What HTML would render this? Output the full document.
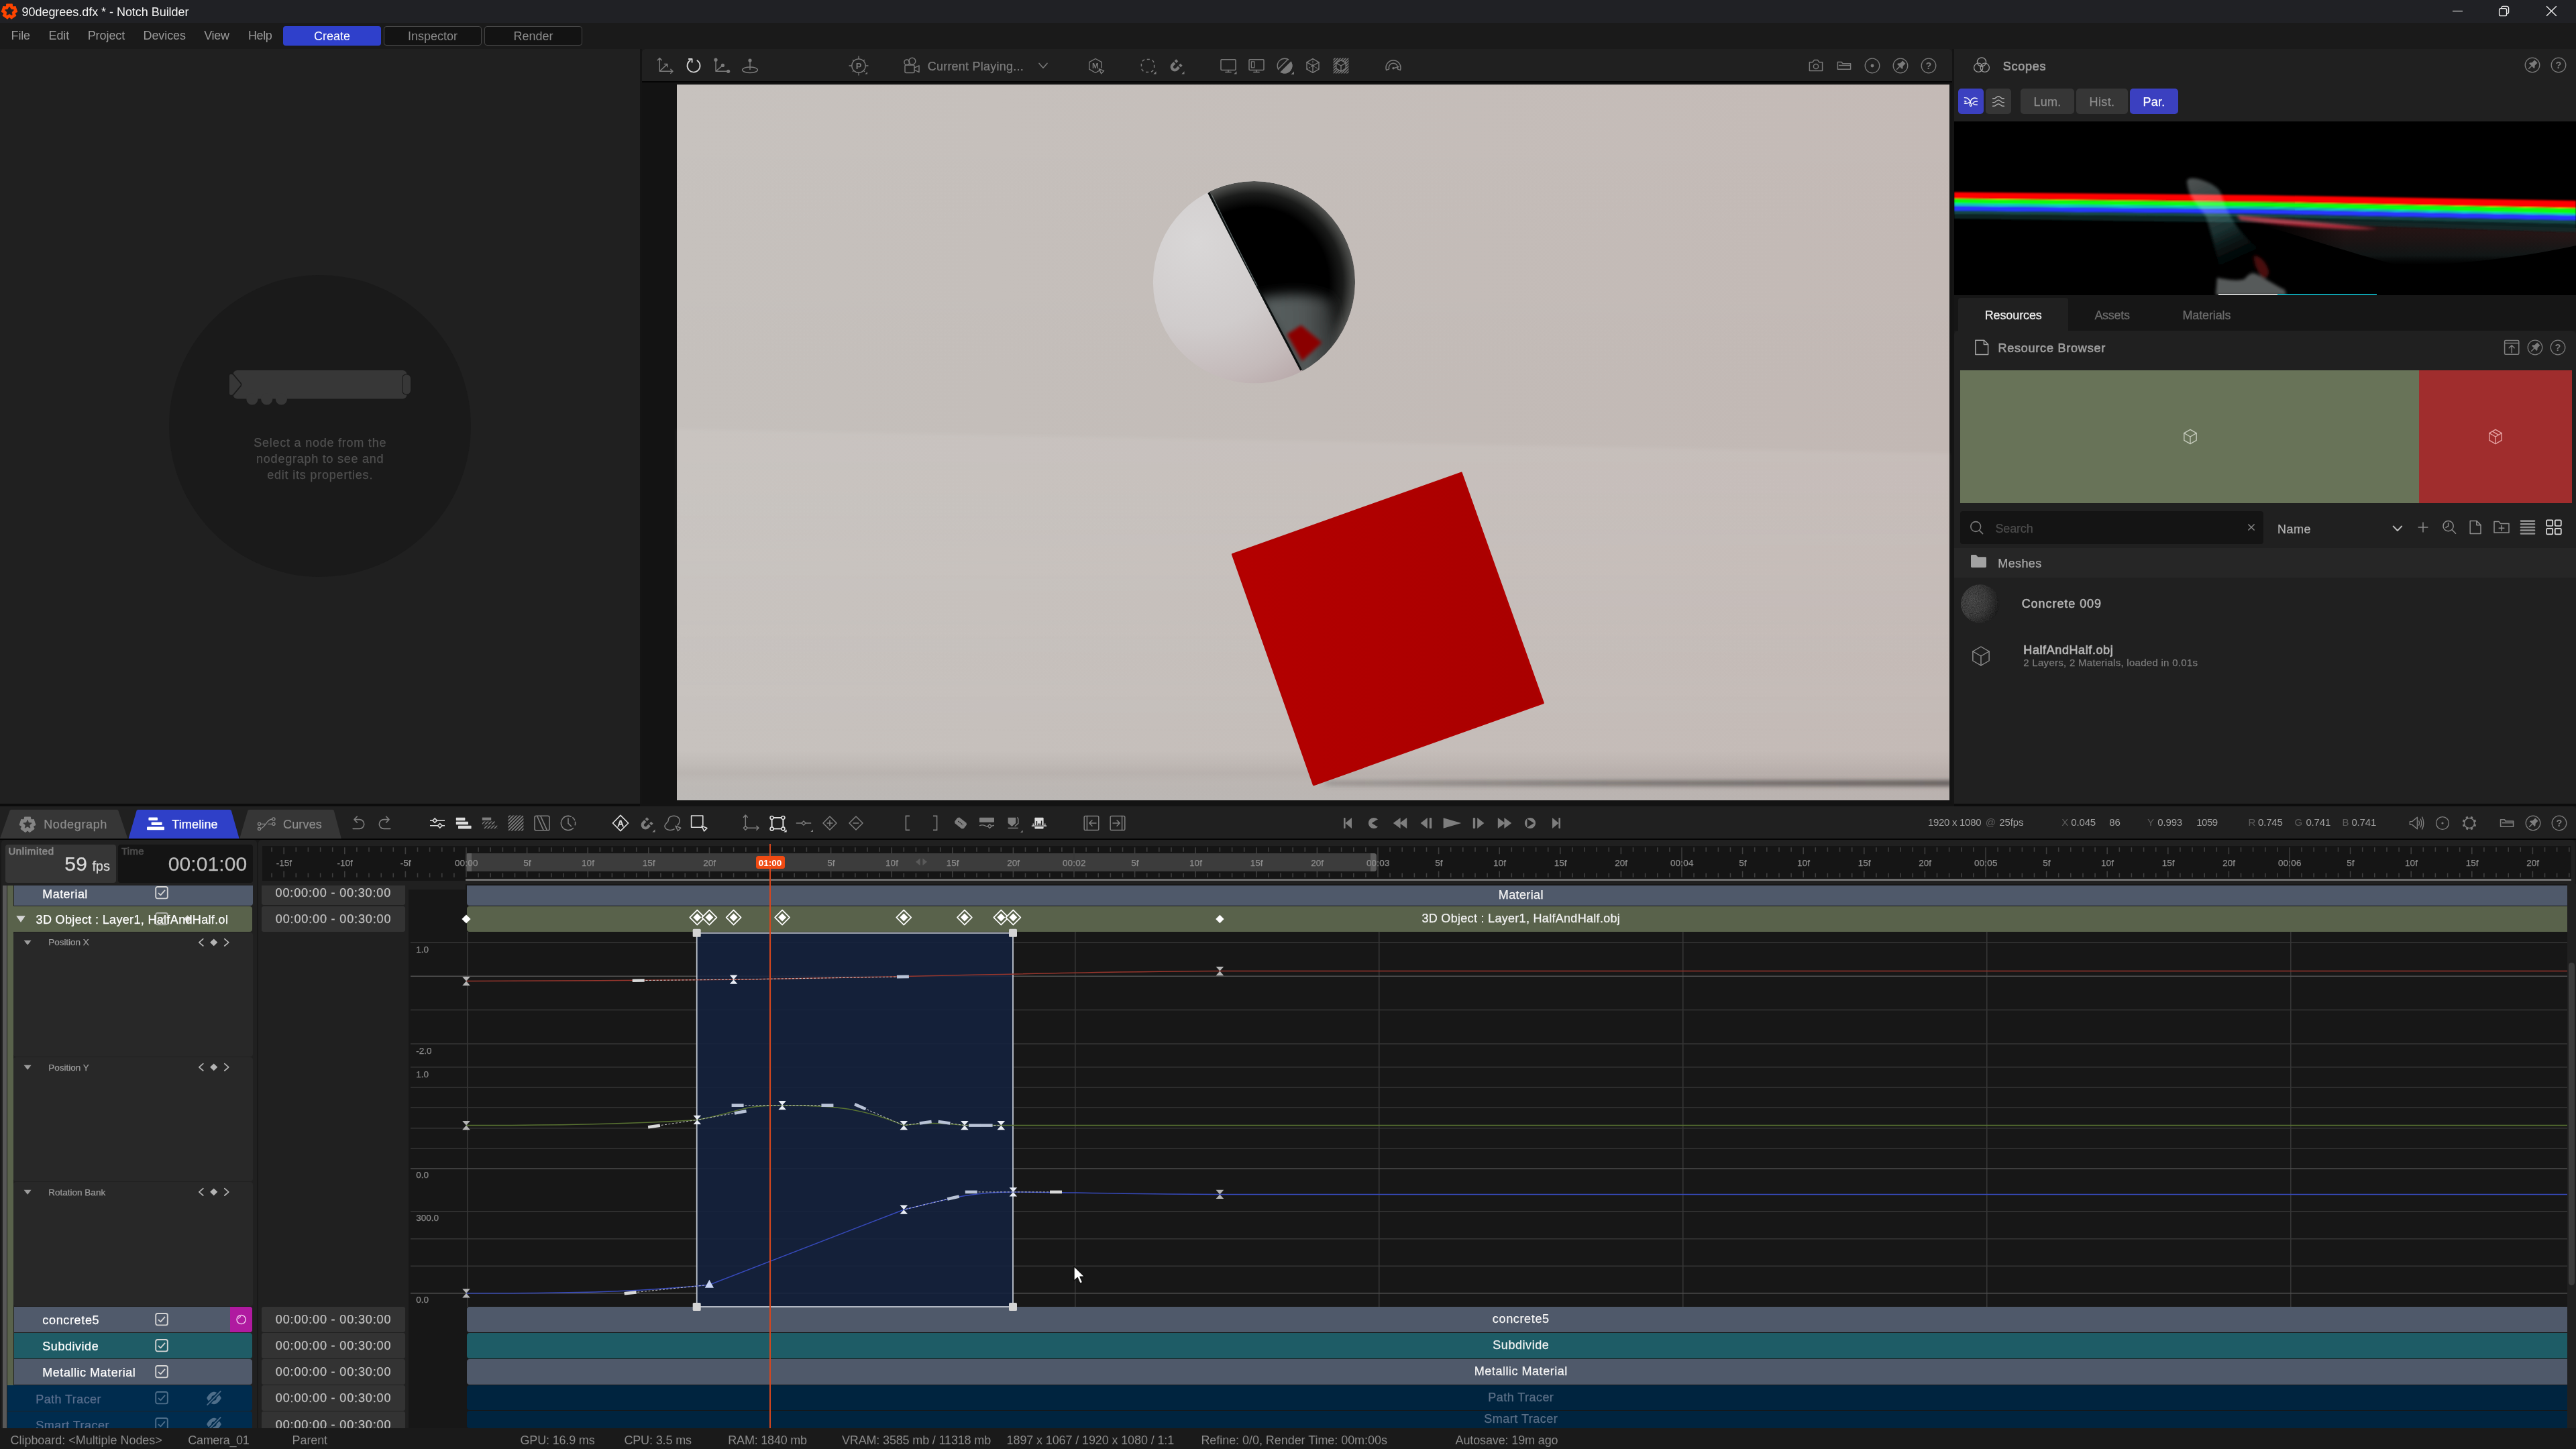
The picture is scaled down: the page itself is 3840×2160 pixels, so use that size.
<!DOCTYPE html>
<html lang="en"><head><meta charset="utf-8"><title>90degrees.dfx * - Notch Builder</title>
<style>
html,body{margin:0;padding:0;background:#1a1a1a;}
body{width:3840px;height:2160px;position:relative;overflow:hidden;font-family:"Liberation Sans", sans-serif;}
#app{position:absolute;left:0;top:0;width:3840px;height:2160px;overflow:hidden;will-change:transform;}
#app div,#app svg,#app span.t{position:absolute;}
span.t{white-space:pre;}
svg{overflow:visible;}

</style></head><body><div id="app">
<div style="left:0px;top:0px;width:3840px;height:34px;background:#202125;"></div>
<svg style="left:0px;top:0px;" width="30" height="34" viewBox="0 0 30 34"><g transform="translate(14,16.9)"><polygon points="-4.58,-7.63 -4.16,-10.83 4.16,-10.83 4.58,-7.63 5.84,-6.72 9.01,-7.30 11.58,0.61 8.67,2.00 8.19,3.48 9.73,6.32 3.00,11.20 0.78,8.87 -0.78,8.87 -3.00,11.20 -9.73,6.32 -8.19,3.48 -8.67,2.00 -11.58,0.61 -9.01,-7.30 -5.84,-6.72" fill="#ff4500" stroke="#ff4500" stroke-width="1.2" stroke-linejoin="round"/><polygon points="0.00,-6.90 2.17,-2.99 6.56,-2.13 3.52,1.14 4.06,5.58 0.00,3.70 -4.06,5.58 -3.52,1.14 -6.56,-2.13 -2.17,-2.99" fill="#202125" stroke="#202125" stroke-width="0.8" stroke-linejoin="round"/></g></svg>
<span class="t" style="left:32.50px;top:9.00px;font-size:18px;line-height:18px;color:#f4f4f4;letter-spacing:-0.037px;">90degrees.dfx * - Notch Builder</span>
<svg style="left:3640px;top:0px;" width="200" height="34" viewBox="0 0 200 34"><g stroke="#f4f4f4" stroke-width="1.35" fill="none"><path d="M16 16.5H31" stroke-width="1.1"/><rect x="85.6" y="12.6" width="11" height="11" rx="2.2"/><path d="M88.8 12.4v-0.6a2.4 2.4 0 0 1 2.4-2.4H96.4a3.2 3.2 0 0 1 3.2 3.2V18a2.4 2.4 0 0 1-2.4 2.4H96.8"/><path d="M156 9.2l14.8 14.6M170.8 9.2l-14.8 14.6"/></g></svg>
<div style="left:0px;top:34px;width:3840px;height:39px;background:#1a1a1a;"></div>
<span class="t" style="left:16.60px;top:44.00px;font-size:18px;line-height:18px;color:#9a9a9a;letter-spacing:-0.204px;">File</span>
<span class="t" style="left:72.60px;top:44.00px;font-size:18px;line-height:18px;color:#9a9a9a;letter-spacing:-0.133px;">Edit</span>
<span class="t" style="left:130.70px;top:44.00px;font-size:18px;line-height:18px;color:#9a9a9a;letter-spacing:-0.076px;">Project</span>
<span class="t" style="left:213.60px;top:44.00px;font-size:18px;line-height:18px;color:#9a9a9a;letter-spacing:-0.119px;">Devices</span>
<span class="t" style="left:304.20px;top:44.00px;font-size:18px;line-height:18px;color:#9a9a9a;letter-spacing:-0.301px;">View</span>
<span class="t" style="left:370.00px;top:44.00px;font-size:18px;line-height:18px;color:#9a9a9a;letter-spacing:-0.383px;">Help</span>
<div style="left:422px;top:39px;width:146px;height:29px;background:#2f40cb;border-radius:4px;"></div>
<span class="t" style="left:468.00px;top:45.00px;font-size:18px;line-height:18px;color:#ffffff;letter-spacing:-0.005px;">Create</span>
<div style="left:572px;top:39px;width:146px;height:29px;background:#131313;border-radius:4px;box-sizing:border-box;border:1px solid #464646;"></div>
<span class="t" style="left:608.00px;top:45.00px;font-size:18px;line-height:18px;color:#8a8a8a;letter-spacing:-0.005px;">Inspector</span>
<div style="left:722px;top:39px;width:146px;height:29px;background:#131313;border-radius:4px;box-sizing:border-box;border:1px solid #464646;"></div>
<span class="t" style="left:765.50px;top:45.00px;font-size:18px;line-height:18px;color:#8a8a8a;letter-spacing:-0.008px;">Render</span>
<div style="left:0px;top:73px;width:954px;height:1125px;background:#202020;"></div>
<div style="left:957px;top:73px;width:1953px;height:1125px;background:#131313;border-radius:5px 5px 0 0;"></div>
<div style="left:957px;top:73px;width:1953px;height:48px;background:#202020;border-radius:5px 5px 0 0;"></div>
<div style="left:957px;top:121px;width:1953px;height:2px;background:#050505;"></div>
<div style="left:2913px;top:73px;width:927px;height:108px;background:#202020;"></div>
<div style="left:2913px;top:181px;width:927px;height:259px;background:#000;"></div>
<div style="left:2913px;top:440px;width:927px;height:53px;background:#161616;"></div>
<div style="left:2919px;top:444px;width:164px;height:49px;background:#202020;border-radius:4px 4px 0 0;"></div>
<div style="left:2913px;top:493px;width:927px;height:705px;background:#202020;border-radius:6px 6px 0 0;"></div>
<div style="left:0px;top:1198px;width:3840px;height:3.5px;background:#0c0c0c;"></div>
<div style="left:954px;top:1198px;width:1959px;height:3.5px;background:#131313;"></div>
<div style="left:0px;top:1201.5px;width:3840px;height:48.5px;background:#202020;border-radius:0 5px 0 0;"></div>
<div style="left:0px;top:1250px;width:3840px;height:1.6px;background:#050505;"></div>
<div style="left:0px;top:1251.6px;width:3840px;height:877.4px;background:#181818;"></div>
<div style="left:0px;top:2129px;width:3840px;height:31px;background:#1a1a1a;"></div>
<svg style="left:0;top:0" width="3840" height="1200" viewBox="0 0 3840 1200">
<defs><clipPath id="vclip"><rect x="1009" y="126" width="1897" height="1067"/></clipPath>
 <linearGradient id="vbgx" x1="0" x2="1" y1="0" y2="0"><stop offset="0" stop-color="#c7c2be"/><stop offset="0.5" stop-color="#c5beba"/><stop offset="1" stop-color="#c4bab6"/></linearGradient>
 <linearGradient id="vbgy" x1="0" x2="0" y1="0" y2="1">
  <stop offset="0" stop-color="#000" stop-opacity="0"/>
  <stop offset="0.48" stop-color="#000" stop-opacity="0.012"/>
  <stop offset="0.93" stop-color="#000" stop-opacity="0.0"/>
  <stop offset="0.948" stop-color="#1a1010" stop-opacity="0.035"/>
  <stop offset="0.962" stop-color="#1a1010" stop-opacity="0.075"/>
  <stop offset="0.976" stop-color="#30383c" stop-opacity="0.06"/>
  <stop offset="1" stop-color="#60707a" stop-opacity="0.10"/>
 </linearGradient>
 <linearGradient id="hzn" x1="0" x2="0" y1="0" y2="1"><stop offset="0" stop-color="#fff" stop-opacity="0.07"/><stop offset="0.25" stop-color="#fff" stop-opacity="0.06"/><stop offset="1" stop-color="#fff" stop-opacity="0"/></linearGradient>
 <linearGradient id="shad" x1="0" x2="1"><stop offset="0" stop-color="#4a4644" stop-opacity="0.25"/><stop offset="0.45" stop-color="#4a4644" stop-opacity="0.55"/><stop offset="1" stop-color="#4a4644" stop-opacity="0.8"/></linearGradient>
 <filter id="b4" x="-5%" y="-300%" width="110%" height="700%"><feGaussianBlur stdDeviation="6 3"/></filter>
 <filter id="b8" x="-20%" y="-20%" width="140%" height="140%"><feGaussianBlur stdDeviation="9"/></filter>
 <filter id="b3" x="-20%" y="-20%" width="140%" height="140%"><feGaussianBlur stdDeviation="2.5"/></filter>
 <radialGradient id="sphw" cx="0.22" cy="0.30" r="0.95"><stop offset="0" stop-color="#d9d7d7"/><stop offset="0.45" stop-color="#d0cccc"/><stop offset="0.72" stop-color="#c4baba"/><stop offset="0.9" stop-color="#b7a7a8"/><stop offset="1" stop-color="#ab9a9b"/></radialGradient>
 <radialGradient id="sphk" cx="0.5" cy="0.5" r="0.5"><stop offset="0" stop-color="#000"/><stop offset="0.74" stop-color="#000"/><stop offset="0.88" stop-color="#1b1c1b"/><stop offset="0.96" stop-color="#424341"/><stop offset="1" stop-color="#545553"/></radialGradient>
 <linearGradient id="refl" x1="0" x2="1"><stop offset="0" stop-color="#5e6666"/><stop offset="0.6" stop-color="#565c5c"/><stop offset="1" stop-color="#2e3030"/></linearGradient>
 <linearGradient id="cubeg" x1="0" x2="1"><stop offset="0" stop-color="#b40000"/><stop offset="1" stop-color="#a90000"/></linearGradient>
 <clipPath id="sphc"><circle cx="1869.5" cy="420.7" r="150.6"/></clipPath>
 <clipPath id="blk"><path d="M1801.7 287.2 Q1866 412 1939.6 551.7 L2100 600 L2100 200 L1801 200Z"/></clipPath>
</defs>
<rect x="1009" y="126" width="1897" height="1067" fill="url(#vbgx)"/>
<rect x="1009" y="126" width="1897" height="1067" fill="url(#vbgy)"/>
<path d="M1009 640 L2906 676 L2906 1100 L1009 1100Z" fill="url(#hzn)" filter="url(#b3)"/>
<!-- floor contact shadow -->
<g clip-path="url(#vclip)">
<rect x="1975" y="1163" width="940" height="9" fill="url(#shad)" filter="url(#b4)"/>
</g>
<!-- sphere -->
<circle cx="1869.5" cy="420.7" r="150.6" fill="url(#sphw)"/>
<g clip-path="url(#sphc)">
 <g clip-path="url(#blk)">
  <circle cx="1869.5" cy="420.7" r="150.6" fill="url(#sphk)"/>
  <g filter="url(#b8)">
   <path d="M1872 446 C1910 436 1950 436 1984 446 L1994 520 L1950 580 L1930 545Z" fill="url(#refl)" opacity="0.95"/>
  </g>
  <path d="M1918.5 498.3 L1939.6 484.7 L1970.6 510.7 L1941 538 Z" fill="#8a0000" filter="url(#b3)"/>
 </g>
 <path d="M1801.7 287.2 Q1866 412 1939.6 551.7" stroke="#0c1010" stroke-width="3" fill="none"/>
 <path d="M1806 290 Q1840 360 1874 426" stroke="#9aa" stroke-width="1.2" fill="none" opacity="0.55"/>
</g>
<!-- cube -->
<path d="M2178.3 705.1 L2300.3 1047.8 L1958.3 1169.8 L1837.4 826.4 Z" fill="url(#cubeg)" stroke="#b00000" stroke-width="3" stroke-linejoin="round"/>
</svg>
<svg style="left:975px;top:81.6px" width="32" height="32" viewBox="-16 -16 32 32"><g stroke="#7b7b7b" stroke-width="1.46" fill="none" stroke-linecap="round" stroke-linejoin="round"><path d="M-7.7 8.3V-11.2M-10.7 -8.2l3-3.2 3 3.2M-7.7 8.3H11.8M8.8 5.3l3.2 3-3.2 3M-7.7 8.3L3.6 -2.4M-0.6 -2.6h4.4v4.4"/></g></svg>
<svg style="left:1017.8px;top:81.6px" width="32" height="32" viewBox="-16 -16 32 32"><g stroke="#d6d6d6" stroke-width="1.81" fill="none" stroke-linecap="round" stroke-linejoin="round"><path d="M5.4 -7.8A9.5 9.5 0 1 1 -5.2 -7.9"/><path d="M-7.2 -10h4.8v4.8"/></g></svg>
<svg style="left:1059.8px;top:81.6px" width="32" height="32" viewBox="-16 -16 32 32"><g stroke="#7b7b7b" stroke-width="1.46" fill="none" stroke-linecap="round" stroke-linejoin="round"><path d="M-9 8.3V-8.8M-9 8.3H9.6M-9 8.3L1.4 -0.6"/><g fill="#7b7b7b" stroke="none"><circle cx="-9" cy="-8.8" r="2.6"/><circle cx="9.6" cy="8.3" r="2.6"/><circle cx="1.4" cy="-0.6" r="2.6"/></g></g></svg>
<svg style="left:1102.2px;top:81.6px" width="32" height="32" viewBox="-16 -16 32 32"><g stroke="#7b7b7b" stroke-width="1.46" fill="none" stroke-linecap="round" stroke-linejoin="round"><ellipse cx="0" cy="6.2" rx="11.4" ry="4.3"/><path d="M0 -8V5.6"/><circle cx="0" cy="-8" r="2.6" fill="#7b7b7b" stroke="none"/></g></svg>
<svg style="left:1264px;top:81.6px" width="32" height="32" viewBox="-16 -16 32 32"><g stroke="#7b7b7b" stroke-width="1.29" fill="none" stroke-linecap="round" stroke-linejoin="round"><circle r="10.2"/><path d="M10.20 0.00L14.00 0.00M7.21 7.21L8.63 8.63M0.00 10.20L0.00 14.00M-7.21 7.21L-8.63 8.63M-10.20 0.00L-14.00 0.00M-7.21 -7.21L-8.63 -8.63M-0.00 -10.20L-0.00 -14.00M7.21 -7.21L8.63 -8.63"/></g><text x="0" y="4.6" text-anchor="middle" font-size="13" font-weight="700" fill="#7b7b7b" font-family="Liberation Sans, sans-serif">P</text><path d="M13 9.0V12.6H9.4Z" fill="#7b7b7b" stroke="none"/></svg>
<svg style="left:1342.5px;top:81.6px" width="32" height="32" viewBox="-16 -16 32 32"><g stroke="#7b7b7b" stroke-width="1.46" fill="none" stroke-linecap="round" stroke-linejoin="round"><rect x="-10" y="-1" width="14" height="11.5" rx="1.5"/><path d="M4 6.2L11 9.6V-0.2L4 3.2"/><circle cx="-7.2" cy="-5.2" r="3.9"/><circle cx="0.8" cy="-6.8" r="5"/></g></svg>
<svg style="left:1538.8px;top:81.6px" width="32" height="32" viewBox="-16 -16 32 32"><g stroke="#7b7b7b" stroke-width="1.55" fill="none" stroke-linecap="round" stroke-linejoin="round"><path d="M-6 -3.6L0 3.2L6 -3.6"/></g></svg>
<svg style="left:1616.8px;top:81.6px" width="32" height="32" viewBox="-16 -16 32 32"><g stroke="#7b7b7b" stroke-width="1.38" fill="none" stroke-linecap="round" stroke-linejoin="round"><path d="M7.5 6.2 0 10.5 -9.3 5.2V-5.3L0 -10.5 9.3 -5.3V3"/><path d="M5.2 4.6L12.6 7.6 8.6 11.8Z"/></g><text x="-0.2" y="3.9" text-anchor="middle" font-size="11.5" font-weight="700" fill="#7b7b7b" font-family="Liberation Sans, sans-serif">M</text></svg>
<svg style="left:1694.8px;top:81.6px" width="32" height="32" viewBox="-16 -16 32 32"><rect x="-9.6" y="-9.6" width="19.2" height="19.2" rx="7.4" fill="none" stroke="#7b7b7b" stroke-width="1.5" stroke-dasharray="4.2 3.81" stroke-dashoffset="-0.9"/><path d="M12.5 8.3V12.5H8.3Z" fill="#7b7b7b" stroke="none"/></svg>
<svg style="left:1736.5px;top:81.6px" width="32" height="32" viewBox="-16 -16 32 32"><g transform="translate(-1,1) scale(0.88) rotate(45)"><path d="M-7.6 -3.4V1.2A7.6 7.6 0 0 0 7.6 1.2V-3.4H2.7V1.2A2.7 2.7 0 0 1 -2.7 1.2V-3.4Z" fill="#7b7b7b"/><rect x="-7.6" y="-9.6" width="4.9" height="4.2" fill="#7b7b7b"/><rect x="2.7" y="-9.6" width="4.9" height="4.2" fill="#7b7b7b"/></g><path d="M12.5 8.3V12.5H8.3Z" fill="#7b7b7b" stroke="none"/></svg>
<svg style="left:1814.6px;top:81.6px" width="32" height="32" viewBox="-16 -16 32 32"><g stroke="#7b7b7b" stroke-width="1.46" fill="none" stroke-linecap="round" stroke-linejoin="round"><rect x="-11" y="-9.2" width="22" height="15.6" rx="1.2"/><path d="M0 6.4V9.4M-4.2 9.6H4.2"/></g><path d="M12.5 8.3V12.5H8.3Z" fill="#7b7b7b" stroke="none"/></svg>
<svg style="left:1856.5px;top:81.6px" width="32" height="32" viewBox="-16 -16 32 32"><g stroke="#7b7b7b" stroke-width="1.46" fill="none" stroke-linecap="round" stroke-linejoin="round"><rect x="-11" y="-9.2" width="22" height="15.6" rx="1.2"/><path d="M0 6.4V9.4M-4.2 9.6H4.2"/></g><g stroke="#7b7b7b" stroke-width="1.29" fill="none" stroke-linecap="round" stroke-linejoin="round"><rect x="-7.6" y="-6.2" width="4.4" height="9" /></g></svg>
<svg style="left:1898.8px;top:81.6px" width="32" height="32" viewBox="-16 -16 32 32"><g stroke="#7b7b7b" stroke-width="1.38" fill="none" stroke-linecap="round" stroke-linejoin="round"><circle r="10.8"/><path d="M7.64 -7.64A10.8 10.8 0 0 1 -7.64 7.64Z" fill="#7b7b7b"/><path d="M-7.64 7.64L7.64 -7.64" stroke="#202020" stroke-width="4.2"/><path d="M-9.6 4.9L4.9 -9.6" /></g><path d="M14 8.4V13H9.4Z" fill="#7b7b7b" stroke="none"/></svg>
<svg style="left:1940.5px;top:81.6px" width="32" height="32" viewBox="-16 -16 32 32"><g stroke="#7b7b7b" stroke-width="1.38" fill="none" stroke-linecap="round" stroke-linejoin="round"><path d="M0 -10.4L9.01 -5.2V5.2L0 10.4L-9.01 5.2V-5.2Z"/><path d="M-9.01 -5.2L0 0L9.01 -5.2M0 0V10.4"/><path d="M0 -10.4V0M-9.01 5.2L0 0L9.01 5.2" stroke-dasharray="1.6 2.2" stroke-width="1.1"/></g></svg>
<svg style="left:1982.8px;top:81.6px" width="32" height="32" viewBox="-16 -16 32 32"><clipPath id="hc"><path clip-rule="evenodd" d="M-11.5 -11.5H11.5V11.5H-11.5ZM0 -8.3L7.2 -4.15V4.15L0 8.3L-7.2 4.15V-4.15Z"/></clipPath><g clip-path="url(#hc)"><path d="M-36 12L-12 -12M-32 12L-8 -12M-28 12L-4 -12M-24 12L0 -12M-20 12L4 -12M-16 12L8 -12M-12 12L12 -12M-8 12L16 -12M-4 12L20 -12M0 12L24 -12M4 12L28 -12M8 12L32 -12M12 12L36 -12" stroke="#7b7b7b" stroke-width="1.5"/></g><g stroke="#7b7b7b" stroke-width="1.38" fill="none" stroke-linecap="round" stroke-linejoin="round"><path d="M0 -8.3L7.19 -4.15V4.15L0 8.3L-7.19 4.15V-4.15Z"/><path d="M-7.19 -4.15L0 0L7.19 -4.15M0 0V8.3"/></g></svg>
<svg style="left:2060.5px;top:81.6px" width="32" height="32" viewBox="-16 -16 32 32"><g stroke="#7b7b7b" stroke-width="1.46" fill="none" stroke-linecap="round" stroke-linejoin="round"><path d="M-10.4 6.6A11 11 0 1 1 10.4 6.6L6.3 4.8A6.6 6.6 0 1 0 -6.3 4.8Z"/><path d="M0.4 3.8L8.4 1.4"/><circle cx="0" cy="3.8" r="1.7" fill="#7b7b7b" stroke="none"/></g></svg>
<svg style="left:2690.8px;top:81.6px" width="32" height="32" viewBox="-16 -16 32 32"><g stroke="#7b7b7b" stroke-width="1.46" fill="none" stroke-linecap="round" stroke-linejoin="round"><path d="M-9.6 -5.2H-5L-2.6 -8.4H2.6L5 -5.2H9.6V7.4H-9.6Z"/><circle cx="0" cy="1" r="3.6"/></g></svg>
<svg style="left:2732.8px;top:81.6px" width="32" height="32" viewBox="-16 -16 32 32"><g stroke="#7b7b7b" stroke-width="1.46" fill="none" stroke-linecap="round" stroke-linejoin="round"><path d="M-9.6 -5.4H-3.6L-2.2 -3.2H9.6V5.2H-9.6Z"/><path d="M-7.4 -0.4H9.4" /></g></svg>
<svg style="left:2774.8px;top:81.6px" width="32" height="32" viewBox="-16 -16 32 32"><g stroke="#7b7b7b" stroke-width="1.29" fill="none" stroke-linecap="round" stroke-linejoin="round"><circle r="10.8"/><circle r="2.4" fill="#7b7b7b" stroke="none"/></g></svg>
<svg style="left:2816.8px;top:81.6px" width="32" height="32" viewBox="-16 -16 32 32"><g stroke="#7b7b7b" stroke-width="1.29" fill="none" stroke-linecap="round" stroke-linejoin="round"><circle r="10.8"/></g><g transform="rotate(45)" fill="#7b7b7b"><path d="M-3 -7.6H3V-2.2L5.2 0.4V1.8H-5.2V0.4L-3 -2.2Z"/><rect x="-0.8" y="1.8" width="1.6" height="6.4"/></g></svg>
<svg style="left:2858.6px;top:81.6px" width="32" height="32" viewBox="-16 -16 32 32"><g stroke="#7b7b7b" stroke-width="1.29" fill="none" stroke-linecap="round" stroke-linejoin="round"><circle r="10.8"/></g><text x="0" y="5.2" text-anchor="middle" font-size="14.5" font-weight="700" fill="#7b7b7b" font-family="Liberation Sans, sans-serif">?</text></svg>
<span class="t" style="left:1382.70px;top:90.00px;font-size:18px;line-height:18px;color:#7c7c7c;-webkit-text-stroke:0.25px #7c7c7c;letter-spacing:0.230px;">Current Playing...</span>
<svg style="left:2938.2px;top:81.4px" width="32" height="32" viewBox="-16 -16 32 32"><g stroke="#9a9a9a" stroke-width="1.29" fill="none" stroke-linecap="round" stroke-linejoin="round"><circle cx="0" cy="-4.6" r="6.6"/><circle cx="-4.8" cy="3.8" r="6.6"/><circle cx="4.8" cy="3.8" r="6.6"/></g></svg>
<span class="t" style="left:2985.80px;top:90.00px;font-size:18px;line-height:18px;color:#9c9c9c;-webkit-text-stroke:0.7px #9c9c9c;letter-spacing:0.742px;">Scopes</span>
<svg style="left:3758.5px;top:81.4px" width="32" height="32" viewBox="-16 -16 32 32"><g stroke="#7b7b7b" stroke-width="1.29" fill="none" stroke-linecap="round" stroke-linejoin="round"><circle r="10.8"/></g><g transform="rotate(45)" fill="#7b7b7b"><path d="M-3 -7.6H3V-2.2L5.2 0.4V1.8H-5.2V0.4L-3 -2.2Z"/><rect x="-0.8" y="1.8" width="1.6" height="6.4"/></g></svg>
<svg style="left:3797.8px;top:81.4px" width="32" height="32" viewBox="-16 -16 32 32"><g stroke="#7b7b7b" stroke-width="1.29" fill="none" stroke-linecap="round" stroke-linejoin="round"><circle r="10.8"/></g><text x="0" y="5.2" text-anchor="middle" font-size="14.5" font-weight="700" fill="#7b7b7b" font-family="Liberation Sans, sans-serif">?</text></svg>
<div style="left:2919px;top:132px;width:38px;height:38px;background:#3b40c0;border-radius:5px;"></div>
<svg style="left:2922px;top:135px" width="32" height="32" viewBox="-16 -16 32 32"><g stroke="#fff" stroke-width="1.38" fill="none" stroke-linecap="round" stroke-linejoin="round"><path d="M-9.6 -5.4C-6 -5.4 -3.8 -5.2 -1.2 0.2C1 5 1.8 7 0 7.4C-2 7.6 -2.4 3 0.2 -1.6C2.4 -5.2 5.6 -5.8 9.4 -4"/><path d="M-9.6 -0.2C-7.4 -0.8 -6.4 0.6 -8.2 0.9M-9.6 3C-6 3.6 -4.6 3.6 -2.4 1.4M2.6 3.2C5 5 7 5.4 9.4 5.2M3.8 1.6C5.6 0.2 7.2 0 9.4 0.2"/></g></svg>
<div style="left:2960px;top:132px;width:38px;height:38px;background:#363636;border-radius:5px;"></div>
<svg style="left:2963px;top:135px" width="32" height="32" viewBox="-16 -16 32 32"><g stroke="#b8b8b8" stroke-width="1.29" fill="none" stroke-linecap="round" stroke-linejoin="round"><path d="M-8.4 -3.9999999999999996H-6.6C-3.6 -3.9999999999999996 -3 -7.3999999999999995 0 -7.3999999999999995C3 -7.3999999999999995 3.6 -3.9999999999999996 6.6 -3.9999999999999996H8.4"/><path d="M-8.4 1.6H-6.6C-3.6 1.6 -3 -1.8 0 -1.8C3 -1.8 3.6 1.6 6.6 1.6H8.4"/><path d="M-8.4 7.199999999999999H-6.6C-3.6 7.199999999999999 -3 3.8 0 3.8C3 3.8 3.6 7.199999999999999 6.6 7.199999999999999H8.4"/></g></svg>
<div style="left:3012px;top:132px;width:80px;height:38px;background:#363636;border-radius:5px;"></div>
<span class="t" style="left:3031.50px;top:143.00px;font-size:18px;line-height:18px;color:#8e8e8e;-webkit-text-stroke:0.25px #8e8e8e;letter-spacing:0.242px;">Lum.</span>
<div style="left:3095px;top:132px;width:77px;height:38px;background:#363636;border-radius:5px;"></div>
<span class="t" style="left:3114.50px;top:143.00px;font-size:18px;line-height:18px;color:#8e8e8e;-webkit-text-stroke:0.25px #8e8e8e;letter-spacing:0.400px;">Hist.</span>
<div style="left:3175px;top:132px;width:72px;height:38px;background:#3b40c0;border-radius:5px;"></div>
<span class="t" style="left:3194.50px;top:143.00px;font-size:18px;line-height:18px;color:#ffffff;-webkit-text-stroke:0.25px #ffffff;letter-spacing:0.242px;">Par.</span>
<div style="left:954px;top:73px;width:3px;height:1125px;background:#141414;"></div>
<div style="left:2910px;top:73px;width:3px;height:1125px;background:#141414;"></div>
<div style="left:251.8px;top:409.8px;width:450px;height:450px;background:#1a1a1a;border-radius:50%;"></div>
<svg style="left:330px;top:540px;" width="300" height="80" viewBox="0 0 300 80"><rect x="17.6" y="12.1" width="258.8" height="42.4" rx="6" fill="#373737"/><circle cx="45.9" cy="55" r="8.6" fill="#373737"/><circle cx="67.7" cy="55" r="8.6" fill="#373737"/><circle cx="89.4" cy="55" r="8.6" fill="#373737"/><path d="M14.2 17.7 Q12 17.9 12 20 V46.5 Q12 48.8 14.4 49 L17 48.2 L28.4 34.6 Q29.4 33.3 28.4 32 L17 18.4Z" fill="#373737" stroke="#1a1a1a" stroke-width="3.4" paint-order="stroke"/><rect x="270.2" y="18.6" width="11.8" height="29" rx="5.5" fill="#373737" stroke="#1a1a1a" stroke-width="2.4" paint-order="stroke"/></svg>
<span class="t" style="left:378.20px;top:651.00px;font-size:18px;line-height:18px;color:#505050;-webkit-text-stroke:0.25px #505050;letter-spacing:0.768px;">Select a node from the</span>
<span class="t" style="left:382.10px;top:675.00px;font-size:18px;line-height:18px;color:#505050;-webkit-text-stroke:0.25px #505050;letter-spacing:0.752px;">nodegraph to see and</span>
<span class="t" style="left:398.20px;top:699.00px;font-size:18px;line-height:18px;color:#505050;-webkit-text-stroke:0.25px #505050;letter-spacing:0.796px;">edit its properties.</span>
<svg style="left:0;top:0" width="3840" height="460" viewBox="0 0 3840 460"><defs>
<filter id="sb1" x="-2%" y="-50%" width="104%" height="200%"><feGaussianBlur stdDeviation="0.9"/></filter>
<filter id="sb2" x="-20%" y="-20%" width="140%" height="140%"><feGaussianBlur stdDeviation="2.2"/></filter>
<clipPath id="scl"><rect x="2913" y="181" width="927" height="259"/></clipPath>
<linearGradient id="trail" x1="0" x2="0" y1="0" y2="1"><stop offset="0" stop-color="#3a1a1a" stop-opacity="0.85"/><stop offset="0.45" stop-color="#2a1c1c" stop-opacity="0.8"/><stop offset="0.8" stop-color="#1a2222" stop-opacity="0.7"/><stop offset="1" stop-color="#101818" stop-opacity="0"/></linearGradient>
<linearGradient id="ghg" x1="0" x2="0.35" y1="0" y2="1"><stop offset="0" stop-color="#505454"/><stop offset="0.3" stop-color="#384242"/><stop offset="0.65" stop-color="#1a3030"/><stop offset="1" stop-color="#0a1414" stop-opacity="0.2"/></linearGradient>
<linearGradient id="trailx" x1="0" x2="1"><stop offset="0" stop-color="#000" stop-opacity="1"/><stop offset="0.25" stop-color="#000" stop-opacity="0.15"/><stop offset="1" stop-color="#000" stop-opacity="0"/></linearGradient>
</defs>
<g clip-path="url(#scl)">
 <path d="M3380 326 L3840 340 L3840 366 C3760 384 3640 398 3570 394 C3500 376 3430 352 3380 338Z" fill="url(#trail)"/>
 <path d="M3380 320 H3840 V400 H3380Z" fill="url(#trailx)"/>
 <g filter="url(#sb1)">
  <path d="M2913 285.8L3370 290.3L3840 298.4L3840 301L3370 292.0L2913 288Z" fill="#ff0000" opacity="0.5"/>
  <path d="M2913 287L3370 291.5L3840 299.7L3840 310.6L3370 300.7L2913 296.3Z" fill="#ff0000" opacity="1"/>
  <path d="M2913 296.3L3370 301.4L3840 310.6L3840 319L3370 308.2L2913 303.5Z" fill="#10ff10" opacity="1"/>
  <path d="M2913 303L3370 308.5L3840 318.6L3840 321.4L3370 311.7L2913 307.4Z" fill="#10c8c0" opacity="1"/>
  <path d="M2913 307.2L3370 312.2L3840 321.2L3840 328.6L3370 318.6L2913 314.2Z" fill="#2838ff" opacity="1"/>
  <path d="M2913 314L3370 319.1L3840 328.4L3840 334L3370 323.6L2913 319Z" fill="#185050" opacity="0.9"/>
  <path d="M2913 319L3370 324.3L3840 334L3840 346L3370 332.1L2913 326Z" fill="#0c2c2c" opacity="0.8"/>
 </g>
 <g filter="url(#sb2)" style="mix-blend-mode:screen">
  <path d="M3260 270 C3262 262 3280 266 3296 274 C3306 280 3310 284 3312 292 C3324 330 3346 354 3364 368 C3370 386 3368 396 3360 404 L3310 404 C3304 380 3296 346 3288 322 C3276 304 3262 296 3260 270Z" fill="url(#ghg)"/>
  <path d="M3303 440 L3305 414 C3316 416 3334 420 3346 416 C3352 408 3358 406 3362 408 C3376 414 3392 426 3406 432 L3408 440Z" fill="#565a5a"/>
  <path d="M3360 382 C3368 380 3378 390 3382 404 C3382 412 3378 416 3372 414 C3366 406 3360 394 3360 382Z" fill="#4a1010"/>
  <path d="M3334 321 C3400 326 3470 332 3544 341 C3500 343 3420 338 3340 328Z" fill="#a82030"/>
 </g>
 <rect x="3307" y="438.4" width="88" height="1.6" fill="#f0f0f0"/>
 <rect x="3395" y="438.4" width="148" height="1.6" fill="#10c8d8"/>
</g></svg>
<span class="t" style="left:2958.70px;top:461.00px;font-size:18px;line-height:18px;color:#f2f2f2;-webkit-text-stroke:0.25px #f2f2f2;letter-spacing:-0.116px;">Resources</span>
<span class="t" style="left:3122.40px;top:461.00px;font-size:18px;line-height:18px;color:#6e6e6e;-webkit-text-stroke:0.25px #6e6e6e;letter-spacing:-0.305px;">Assets</span>
<span class="t" style="left:3253.40px;top:461.00px;font-size:18px;line-height:18px;color:#6e6e6e;-webkit-text-stroke:0.25px #6e6e6e;letter-spacing:-0.115px;">Materials</span>
<svg style="left:2940px;top:500px;" width="32" height="36" viewBox="0 0 32 36"><path d="M4.8 7.2H17.6L23.6 13.2V28.6H4.8Z M17.4 7.4V13.4H23.4" fill="none" stroke="#a2a2a2" stroke-width="1.5" stroke-linejoin="round"/></svg>
<span class="t" style="left:2978.40px;top:510.00px;font-size:18px;line-height:18px;color:#9c9c9c;-webkit-text-stroke:0.7px #9c9c9c;letter-spacing:0.784px;">Resource Browser</span>
<svg style="left:3728px;top:502px;" width="32" height="32" viewBox="0 0 32 32"><g transform="translate(16.2,15.8)" fill="none" stroke="#7e7e7e" stroke-width="1.5" stroke-linejoin="round" stroke-linecap="round"><rect x="-10.6" y="-10.4" width="21.2" height="20.8" rx="1.5"/><path d="M-10.6 -6.2H10.6M0 8V-2.6M-4 1L0 -3L4 1"/></g></svg>
<svg style="left:3762.9px;top:501.79999999999995px" width="32" height="32" viewBox="-16 -16 32 32"><g stroke="#7b7b7b" stroke-width="1.29" fill="none" stroke-linecap="round" stroke-linejoin="round"><circle r="10.8"/></g><g transform="rotate(45)" fill="#7b7b7b"><path d="M-3 -7.6H3V-2.2L5.2 0.4V1.8H-5.2V0.4L-3 -2.2Z"/><rect x="-0.8" y="1.8" width="1.6" height="6.4"/></g></svg>
<svg style="left:3797.2px;top:501.79999999999995px" width="32" height="32" viewBox="-16 -16 32 32"><g stroke="#7b7b7b" stroke-width="1.29" fill="none" stroke-linecap="round" stroke-linejoin="round"><circle r="10.8"/></g><text x="0" y="5.2" text-anchor="middle" font-size="14.5" font-weight="700" fill="#7b7b7b" font-family="Liberation Sans, sans-serif">?</text></svg>
<div style="left:2922px;top:552px;width:683.6px;height:197.6px;background:#687358;"></div>
<div style="left:3605.6px;top:552px;width:228.2px;height:197.6px;background:#a02d2d;"></div>
<svg style="left:3248.5px;top:635.2px" width="32" height="32" viewBox="-16 -16 32 32"><g stroke="#c6cbbd" stroke-width="1.38" fill="none" stroke-linecap="round" stroke-linejoin="round"><path d="M0 -10.6L9.18 -5.3V5.3L0 10.6L-9.18 5.3V-5.3Z"/><path d="M-9.18 -5.3L0 0L9.18 -5.3M0 0V10.6"/></g></svg>
<svg style="left:3704.3px;top:635.2px" width="32" height="32" viewBox="-16 -16 32 32"><g stroke="#e6a4a4" stroke-width="1.38" fill="none" stroke-linecap="round" stroke-linejoin="round"><path d="M0 -10.6L9.18 -5.3V5.3L0 10.6L-9.18 5.3V-5.3Z"/><path d="M-9.18 -5.3L0 0L9.18 -5.3M0 0V10.6"/></g><path d="M-4.6 -7.9L4.6 -2.65" stroke="#e6a4a4" stroke-width="1.4"/></svg>
<div style="left:2922px;top:762px;width:451.8px;height:49.4px;background:#141414;border-radius:4px;"></div>
<svg style="left:2930px;top:770px;" width="34" height="34" viewBox="0 0 34 34"><g fill="none" stroke="#7a7a7a" stroke-width="1.6" stroke-linecap="round"><circle cx="15.2" cy="15" r="7.4"/><path d="M20.6 20.6L25.6 25.6"/></g></svg>
<span class="t" style="left:2974.50px;top:779.00px;font-size:18px;line-height:18px;color:#4c4c4c;-webkit-text-stroke:0.25px #4c4c4c;letter-spacing:-0.174px;">Search</span>
<svg style="left:3345.5px;top:776px;" width="20" height="20" viewBox="0 0 20 20"><path d="M5.4 5.4L14.6 14.6M14.6 5.4L5.4 14.6" stroke="#8a8a8a" stroke-width="1.4" fill="none"/></svg>
<span class="t" style="left:3395.00px;top:780.00px;font-size:18px;line-height:18px;color:#b4b4b4;-webkit-text-stroke:0.25px #b4b4b4;letter-spacing:0.496px;">Name</span>
<svg style="left:3560px;top:774px;" width="28" height="28" viewBox="0 0 28 28"><path d="M7.6 10.4L13.9 17L20.2 10.4" stroke="#c0c0c0" stroke-width="1.9" fill="none" stroke-linecap="round" stroke-linejoin="round"/></svg>
<svg style="left:3596.3px;top:770.2px;" width="32" height="32" viewBox="0 0 32 32"><path d="M16 8.6V23.4M8.6 16H23.4" stroke="#8c8c8c" stroke-width="1.5" fill="none"/></svg>
<svg style="left:3635.4px;top:770.2px;" width="32" height="32" viewBox="0 0 32 32"><g fill="none" stroke="#8c8c8c" stroke-width="1.5" stroke-linecap="round"><circle cx="14.6" cy="14.2" r="7.6"/><path d="M20.2 19.8L25.6 25.2M14.6 9.8V14.4L11 16.4"/></g></svg>
<svg style="left:3674.2px;top:770.2px;" width="32" height="32" viewBox="0 0 32 32"><path d="M8.2 6.6H18L24 12.6V25.4H8.2Z M17.8 6.8V12.8H23.8" fill="none" stroke="#8c8c8c" stroke-width="1.5" stroke-linejoin="round"/></svg>
<svg style="left:3713.3px;top:770.2px;" width="32" height="32" viewBox="0 0 32 32"><g fill="none" stroke="#8c8c8c" stroke-width="1.5" stroke-linejoin="round" stroke-linecap="round"><path d="M5 24V7.6H12L14.4 10.4H27V24Z"/><path d="M16 13.4V21M12.2 17.2H19.8"/></g></svg>
<svg style="left:3752.4px;top:770.2px;" width="32" height="32" viewBox="0 0 32 32"><path d="M6 6.6H26M6 11.3H26M6 16H26M6 20.7H26M6 25.4H26" stroke="#8c8c8c" stroke-width="2.7" stroke-linecap="round" fill="none"/></svg>
<svg style="left:3791.2px;top:770.2px;" width="32" height="32" viewBox="0 0 32 32"><g fill="none" stroke="#e2e2e2" stroke-width="1.7"><rect x="5.2" y="5.4" width="9" height="8.6" rx="1.2"/><rect x="17.8" y="5.4" width="9" height="8.6" rx="1.2"/><rect x="5.2" y="17.8" width="9" height="8.6" rx="1.2"/><rect x="17.8" y="17.8" width="9" height="8.6" rx="1.2"/></g></svg>
<div style="left:2913px;top:817px;width:927px;height:44px;background:#262626;"></div>
<svg style="left:2936px;top:826px;" width="28" height="24" viewBox="0 0 28 24"><path d="M2 2.4Q2 1 3.4 1H9.6L12.4 4.2H23.6Q25 4.2 25 5.6V18.6Q25 20 23.6 20H3.4Q2 20 2 18.6Z" fill="#a2a2a2"/></svg>
<span class="t" style="left:2978.30px;top:831.00px;font-size:18px;line-height:18px;color:#a8a8a8;-webkit-text-stroke:0.25px #a8a8a8;letter-spacing:0.361px;">Meshes</span>
<svg style="left:2922px;top:870px;" width="60" height="60" viewBox="0 0 60 60"><defs><radialGradient id="csg" cx="0.28" cy="0.42" r="0.78"><stop offset="0" stop-color="#525252"/><stop offset="0.5" stop-color="#464646"/><stop offset="0.8" stop-color="#2e2e2e"/><stop offset="1" stop-color="#1c1c1c"/></radialGradient>
<filter id="csn" x="0" y="0" width="100%" height="100%"><feTurbulence type="fractalNoise" baseFrequency="0.9" numOctaves="2" seed="3"/><feColorMatrix values="0 0 0 0 0  0 0 0 0 0  0 0 0 0 0  0.9 0.9 0.9 0 -1.05"/><feComposite in2="SourceGraphic" operator="in"/></filter></defs>
<circle cx="29.8" cy="30" r="28.7" fill="url(#csg)"/><circle cx="29.8" cy="30" r="28.7" fill="#000" filter="url(#csn)" opacity="0.55"/></svg>
<span class="t" style="left:3013.70px;top:891.00px;font-size:18px;line-height:18px;color:#b6b6b6;-webkit-text-stroke:0.5px #b6b6b6;letter-spacing:0.935px;">Concrete 009</span>
<svg style="left:2933px;top:958px" width="40" height="40" viewBox="-20 -20 40 40"><g stroke="#929292" stroke-width="1.38" fill="none" stroke-linecap="round" stroke-linejoin="round"><path d="M0 -14L12.12 -7.0V7.0L0 14L-12.12 7.0V-7.0Z"/><path d="M-12.12 -7.0L0 0L12.12 -7.0M0 0V14"/></g></svg>
<span class="t" style="left:3016.30px;top:960.00px;font-size:18px;line-height:18px;color:#b6b6b6;-webkit-text-stroke:0.7px #b6b6b6;letter-spacing:0.595px;">HalfAndHalf.obj</span>
<span class="t" style="left:3016.30px;top:980.00px;font-size:15px;line-height:15px;color:#7c7c7c;-webkit-text-stroke:0.25px #7c7c7c;letter-spacing:0.281px;">2 Layers, 2 Materials, loaded in 0.01s</span>
<svg style="left:0;top:1200px" width="520" height="52" viewBox="0 0 520 52"><path d="M0 50L14.6 8.6Q15.2 7 17 7H174Q175.8 7 176.4 8.6L190.4 50Z" fill="#363636"/><path d="M191.6 50L203.6 8.6Q204.2 7 206 7H342.4Q344.2 7 344.8 8.6L356.6 50Z" fill="#2f40c8"/><path d="M357.2 50L369.4 8.6Q370 7 371.8 7H495.4Q497.2 7 497.8 8.6L508.8 50Z" fill="#363636"/></svg>
<svg style="left:23.2px;top:1210.6px" width="36" height="36" viewBox="-18.0 -18.0 36 36"><polygon points="-4.79,-7.97 -4.23,-11.02 4.23,-11.02 4.79,-7.97 6.10,-7.02 9.17,-7.43 11.78,0.62 9.06,2.09 8.56,3.63 9.90,6.43 3.05,11.40 0.81,9.26 -0.81,9.26 -3.05,11.40 -9.90,6.43 -8.56,3.63 -9.06,2.09 -11.78,0.62 -9.17,-7.43 -6.10,-7.02" fill="#858585" stroke="#858585" stroke-width="1.2" stroke-linejoin="round"/><polygon points="0.00,-6.60 1.76,-2.43 6.28,-2.04 2.85,0.93 3.88,5.34 0.00,3.00 -3.88,5.34 -2.85,0.93 -6.28,-2.04 -1.76,-2.43" fill="#363636" stroke="#363636" stroke-width="0.8" stroke-linejoin="round"/></svg>
<span class="t" style="left:65.20px;top:1220.00px;font-size:18px;line-height:18px;color:#8c8c8c;-webkit-text-stroke:0.25px #8c8c8c;letter-spacing:0.636px;">Nodegraph</span>
<svg style="left:214.0px;top:1210.0px" width="36" height="36" viewBox="-18.0 -18.0 36 36"><g fill="#fff"><rect x="-10.6" y="-9.4" width="13.6" height="4.4" rx="1"/><rect x="-6.4" y="-2.4" width="16" height="4.4" rx="1"/><rect x="-13" y="4.6" width="26" height="4.6" rx="1"/></g></svg>
<span class="t" style="left:256.20px;top:1220.00px;font-size:18px;line-height:18px;color:#ffffff;-webkit-text-stroke:0.25px #ffffff;letter-spacing:0.155px;">Timeline</span>
<svg style="left:378.5px;top:1209.0px" width="36" height="36" viewBox="-18.0 -18.0 36 36"><g fill="none" stroke="#8a8a8a" stroke-width="1.3"><path d="M-8.6 8C-0.6 6.6 -0.4 -5.6 8.8 -6"/><path d="M-8.4 1.3H-1.6M2.4 1.3H8.8"/><circle cx="-10.5" cy="1.3" r="2.1"/><circle cx="-10.5" cy="8.6" r="2.1"/><circle cx="10.9" cy="-6" r="2.1"/><circle cx="10.9" cy="1.3" r="2.1" /></g></svg>
<span class="t" style="left:422.00px;top:1220.00px;font-size:18px;line-height:18px;color:#8c8c8c;-webkit-text-stroke:0.25px #8c8c8c;letter-spacing:0.164px;">Curves</span>
<svg style="left:517.3px;top:1208.5px" width="36" height="36" viewBox="-18.0 -18.0 36 36"><g fill="none" stroke="#7e7e7e" stroke-width="1.6" stroke-linecap="round" stroke-linejoin="round"><path d="M-8.8 8.4H0.8A6.9 6.9 0 0 0 0.8 -5.4H-6.6M-2.6 -10L-7 -5.4L-2.6 -0.8"/></g></svg>
<svg style="left:555.0px;top:1208.5px" width="36" height="36" viewBox="-18.0 -18.0 36 36"><g fill="none" stroke="#7e7e7e" stroke-width="1.6" stroke-linecap="round" stroke-linejoin="round"><path d="M8.8 8.4H-0.8A6.9 6.9 0 0 1 -0.8 -5.4H6.6M2.6 -10L7 -5.4L2.6 -0.8"/></g></svg>
<svg style="left:634.0px;top:1208.5px" width="36" height="36" viewBox="-18.0 -18.0 36 36"><g fill="#202020" stroke="#dcdcdc" stroke-width="1.6"><path d="M-11 -3.8H11M-11 3.8H11"/><path d="M-7 -3.8L-3.8 -7L-0.6 -3.8L-3.8 -0.6Z"/><path d="M0.6 3.8L3.8 0.6L7 3.8L3.8 7Z"/></g></svg>
<svg style="left:672.5px;top:1208.5px" width="36" height="36" viewBox="-18.0 -18.0 36 36"><g fill="#dcdcdc"><rect x="-11.2" y="-8.2" width="13.6" height="4.4" rx="0.6"/><rect x="-11.2" y="-2.2" width="18.2" height="4.4" rx="0.6"/><rect x="-8" y="3.8" width="19.6" height="4.6" rx="0.6"/></g></svg>
<svg style="left:711.8px;top:1208.5px" width="36" height="36" viewBox="-18.0 -18.0 36 36"><rect x="-11.2" y="-8.4" width="13.4" height="4.2" fill="#7e7e7e"/><clipPath id="lh"><path d="M-11.2 -2.4H8V2H-11.2ZM-8.6 3.6H11.4V8.2H-8.6Z"/></clipPath><g clip-path="url(#lh)"><path d="M-44 14L-16 -14M-39 14L-11 -14M-34 14L-6 -14M-29 14L-1 -14M-24 14L4 -14M-19 14L9 -14M-14 14L14 -14M-9 14L19 -14M-4 14L24 -14M1 14L29 -14M6 14L34 -14M11 14L39 -14M16 14L44 -14" stroke="#7e7e7e" stroke-width="1.5"/></g></svg>
<svg style="left:750.8px;top:1208.5px" width="36" height="36" viewBox="-18.0 -18.0 36 36"><clipPath id="hs"><rect x="-11.4" y="-11.4" width="22.8" height="22.8" rx="1.5"/></clipPath><g clip-path="url(#hs)"><path d="M-44 14L-16 -14M-39 14L-11 -14M-34 14L-6 -14M-29 14L-1 -14M-24 14L4 -14M-19 14L9 -14M-14 14L14 -14M-9 14L19 -14M-4 14L24 -14M1 14L29 -14M6 14L34 -14M11 14L39 -14M16 14L44 -14" stroke="#7e7e7e" stroke-width="1.6"/></g></svg>
<svg style="left:789.7px;top:1208.5px" width="36" height="36" viewBox="-18.0 -18.0 36 36"><g fill="none" stroke="#7e7e7e" stroke-width="1.6" stroke-linejoin="round"><rect x="-11" y="-10.8" width="22" height="21.6" rx="2.4"/><path d="M-7.4 -10.6L2.2 10.6M-2.2 -10.6L7.4 10.6"/></g></svg>
<svg style="left:828.8px;top:1208.5px" width="36" height="36" viewBox="-18.0 -18.0 36 36"><g fill="none" stroke="#7e7e7e" stroke-width="1.6" stroke-linecap="round"><path d="M0 -10.6A10.6 10.6 0 1 0 7.5 7.5"/><path d="M0 -10.6A10.6 10.6 0 0 1 9.6 4.6" stroke-dasharray="4.4 3"/><path d="M0 -7V0.4L4.4 4.6"/></g></svg>
<svg style="left:906.8px;top:1208.5px" width="36" height="36" viewBox="-18.0 -18.0 36 36"><path d="M0 -11.6L11.6 0L0 11.6L-11.6 0Z" fill="none" stroke="#dcdcdc" stroke-width="1.7" stroke-linejoin="round"/><text x="0" y="4.7" text-anchor="middle" font-size="13.5" font-weight="700" fill="#dcdcdc" stroke="#dcdcdc" stroke-width="0.35" font-family="Liberation Sans, sans-serif">A</text></svg>
<svg style="left:945.7px;top:1210.1px" width="36" height="36" viewBox="-18.0 -18.0 36 36"><g transform="translate(-1,1) scale(0.88) rotate(45)"><path d="M-7.6 -3.4V1.2A7.6 7.6 0 0 0 7.6 1.2V-3.4H2.7V1.2A2.7 2.7 0 0 1 -2.7 1.2V-3.4Z" fill="#7e7e7e"/><rect x="-7.6" y="-9.6" width="4.9" height="4.2" fill="#7e7e7e"/><rect x="2.7" y="-9.6" width="4.9" height="4.2" fill="#7e7e7e"/></g><path d="M12.5 8.3V12.5H8.3Z" fill="#7e7e7e" stroke="none"/></svg>
<svg style="left:985.2px;top:1208.5px" width="36" height="36" viewBox="-18.0 -18.0 36 36"><g fill="none" stroke="#7e7e7e" stroke-width="1.5" stroke-linejoin="round"><path d="M2.6 8.6C-2 11.6 -10.8 11 -12 5.4C-12.8 0.6 -6.4 -0.6 -6.6 -5C-6.8 -10.6 3.8 -13.4 9 -7.4C11.6 -4 9.6 1 6.6 3.4"/><path d="M4 4.2L11.8 7.2L7.6 11.6Z"/></g></svg>
<svg style="left:1023.2px;top:1208.5px" width="36" height="36" viewBox="-18.0 -18.0 36 36"><g fill="none" stroke="#dcdcdc" stroke-linejoin="round"><path d="M5.6 6.2H-10.4V-11H6.8V3.8" stroke-width="1.6"/><path d="M5 4.2L13 7.4L8.6 12Z" stroke-width="1.6"/></g></svg>
<svg style="left:1101.6px;top:1208.5px" width="36" height="36" viewBox="-18.0 -18.0 36 36"><g fill="none" stroke="#7e7e7e" stroke-width="1.5" stroke-linecap="round" stroke-linejoin="round"><path d="M-8.7 4.6V-11.6M-11.6 -8.8L-8.7 -12L-5.8 -8.8M-6 7.3H10.6M7.8 4.4L11 7.3L7.8 10.2"/><path d="M-8.7 4.4L-5.8 7.3L-8.7 10.2L-11.6 7.3Z"/></g></svg>
<svg style="left:1140.7px;top:1208.5px" width="36" height="36" viewBox="-18.0 -18.0 36 36"><g fill="#202020" stroke="#dcdcdc" stroke-width="1.7"><rect x="-8.4" y="-8" width="16.8" height="16.4" fill="none" stroke-width="2"/><circle cx="-8.4" cy="-8" r="2.5"/><circle cx="8.4" cy="-8" r="2.5"/><circle cx="-8.4" cy="8.4" r="2.5"/><circle cx="8.4" cy="8.4" r="2.5"/></g><path d="M13.6 9.399999999999999V13.6H9.399999999999999Z" fill="#dcdcdc" stroke="none"/></svg>
<svg style="left:1179.8px;top:1208.5px" width="36" height="36" viewBox="-18.0 -18.0 36 36"><g fill="none" stroke="#7e7e7e" stroke-width="1.4"><path d="M-11.2 0H-3M3 0H11.2"/><path d="M-3 0L0 -3L3 0L0 3Z"/></g><path d="M14 9.4V13H10.4Z" fill="#7e7e7e" stroke="none"/></svg>
<svg style="left:1218.5px;top:1208.5px" width="36" height="36" viewBox="-18.0 -18.0 36 36"><g fill="none" stroke="#7e7e7e" stroke-width="1.5" stroke-linejoin="round"><path d="M0 -10L10 0L0 10L-10 0Z"/><path d="M-4.4 0H4.4M0 -4.4V4.4"/></g></svg>
<svg style="left:1257.5px;top:1208.5px" width="36" height="36" viewBox="-18.0 -18.0 36 36"><g fill="none" stroke="#7e7e7e" stroke-width="1.5" stroke-linejoin="round"><path d="M0 -10L10 0L0 10L-10 0Z"/><path d="M-4.4 0H4.4"/></g></svg>
<svg style="left:1335.2px;top:1208.5px" width="36" height="36" viewBox="-18.0 -18.0 36 36"><path d="M3 -10.6H-2.6V10.4H3" fill="none" stroke="#7e7e7e" stroke-width="1.6"/></svg>
<svg style="left:1375.6px;top:1208.5px" width="36" height="36" viewBox="-18.0 -18.0 36 36"><path d="M-3 -10.6H2.6V10.4H-3" fill="none" stroke="#7e7e7e" stroke-width="1.6"/></svg>
<svg style="left:1413.8px;top:1208.8px" width="36" height="36" viewBox="-18.0 -18.0 36 36"><g transform="rotate(38)"><path d="M-8.6 -3.4L-6.6 -5.6H6.6L8.6 -3.4V3.4L6.6 5.6H-6.6L-8.6 3.4Z" fill="#7e7e7e"/><path d="M-4.6 0H4.6" stroke="#202020" stroke-width="1.6" stroke-dasharray="1.6 1.2"/></g></svg>
<svg style="left:1453.0px;top:1208.5px" width="36" height="36" viewBox="-18.0 -18.0 36 36"><rect x="-11" y="-8.2" width="22" height="7" rx="0.8" fill="#7e7e7e"/><g fill="none" stroke="#7e7e7e" stroke-width="1.4"><path d="M-11 3.8C-4 0.6 -2 5.6 1.6 5.2M7 4.6C8.6 3.8 9.8 3.4 11 3.2"/><path d="M1.4 4.6L4.3 1.7L7.2 4.6L4.3 7.5Z"/></g></svg>
<svg style="left:1491.6px;top:1208.5px" width="36" height="36" viewBox="-18.0 -18.0 36 36"><path d="M-7.4 -8.2H4.2V0L-1.6 5L-7.4 0Z" fill="#7e7e7e"/><path d="M6 -8.2Q7.8 -8 7.8 -6V0.4L2.6 5" fill="none" stroke="#7e7e7e" stroke-width="1.5"/><path d="M-7.4 7.4H7.6" stroke="#7e7e7e" stroke-width="1.5"/><path d="M14.6 10.4V14H11.0Z" fill="#7e7e7e" stroke="none"/></svg>
<svg style="left:1530.6px;top:1208.5px" width="36" height="36" viewBox="-18.0 -18.0 36 36"><rect x="-6.6" y="-8.2" width="13.2" height="16.6" rx="0.8" fill="#dcdcdc"/><path d="M-11.2 4.2H11.2" stroke="#dcdcdc" stroke-width="1.4"/><path d="M-8.8 4V0.4M8.8 4V0.4" stroke="#dcdcdc" stroke-width="1.2"/><path d="M-3.6 3.6V-3M-1.2 3.6V0.6M1.2 3.6V0.6M3.6 3.6V-3.4" stroke="#202020" stroke-width="1.5"/><path d="M-6.6 4.2H6.6" stroke="#202020" stroke-width="1.2"/></svg>
<svg style="left:1608.6px;top:1208.5px" width="36" height="36" viewBox="-18.0 -18.0 36 36"><g fill="none" stroke="#7e7e7e" stroke-width="1.5" stroke-linecap="round" stroke-linejoin="round"><rect x="-10.8" y="-10.6" width="21.6" height="21.2" rx="1.6"/><path d="M-6.6 -10.4V10.4M7 0H-3M1 -4.2L-3.2 0L1 4.2"/></g></svg>
<svg style="left:1647.5px;top:1208.5px" width="36" height="36" viewBox="-18.0 -18.0 36 36"><g fill="none" stroke="#7e7e7e" stroke-width="1.5" stroke-linecap="round" stroke-linejoin="round"><rect x="-10.8" y="-10.6" width="21.6" height="21.2" rx="1.6"/><path d="M6.6 -10.4V10.4M-7 0H3M-1 -4.2L3.2 0L-1 4.2"/></g></svg>
<svg style="left:1990.5px;top:1208.5px" width="36" height="36" viewBox="-18.0 -18.0 36 36"><g fill="#7e7e7e"><rect x="-6" y="-8.1" width="2.6" height="16.2" rx="1"/><path d="M6 -8.1V8.1L-3.6 0Z"/></g></svg>
<svg style="left:2029.5px;top:1208.5px" width="36" height="36" viewBox="-18.0 -18.0 36 36"><circle r="8.1" fill="#7e7e7e"/><path d="M9 -7.6V7.6L-3 0Z" fill="#202020"/><path d="M-2.8 0L5 -5V5Z" fill="#202020"/></svg>
<svg style="left:2069.2px;top:1208.5px" width="36" height="36" viewBox="-18.0 -18.0 36 36"><g fill="#7e7e7e"><path d="M0.6 -8.1V8.1L-10.2 0Z"/><path d="M10.2 -8.1V8.1L-0.6 0Z"/></g></svg>
<svg style="left:2108.3px;top:1208.5px" width="36" height="36" viewBox="-18.0 -18.0 36 36"><g fill="#7e7e7e"><path d="M1.8 -8.1V8.1L-8.4 0Z"/><rect x="4.8" y="-8.1" width="3.4" height="16.2" rx="1.2"/></g></svg>
<svg style="left:2147.0px;top:1208.5px" width="36" height="36" viewBox="-18.0 -18.0 36 36"><path d="M-13.4 -7.8V7.8L13.4 0Z" fill="#7e7e7e"/></svg>
<svg style="left:2186.4px;top:1208.5px" width="36" height="36" viewBox="-18.0 -18.0 36 36"><g fill="#7e7e7e"><path d="M-1.8 -8.1V8.1L8.4 0Z"/><rect x="-8.2" y="-8.1" width="3.4" height="16.2" rx="1.2"/></g></svg>
<svg style="left:2225.4px;top:1208.5px" width="36" height="36" viewBox="-18.0 -18.0 36 36"><g fill="#7e7e7e"><path d="M-0.6 -8.1V8.1L10.2 0Z"/><path d="M-10.2 -8.1V8.1L0.6 0Z"/></g></svg>
<svg style="left:2263.2px;top:1208.5px" width="36" height="36" viewBox="-18.0 -18.0 36 36"><circle r="8.1" fill="#7e7e7e"/><path d="M-4.6 -6.6V6.6L5.6 0Z" fill="#202020"/></svg>
<svg style="left:2302.4px;top:1208.5px" width="36" height="36" viewBox="-18.0 -18.0 36 36"><g fill="#7e7e7e"><rect x="3.4" y="-8.1" width="2.6" height="16.2" rx="1"/><path d="M-6 -8.1V8.1L3.6 0Z"/></g></svg>
<span class="t" style="left:2874.00px;top:1218.00px;font-size:15px;line-height:15px;color:#a0a0a0;letter-spacing:-0.307px;">1920 x 1080</span>
<span class="t" style="left:2959.70px;top:1218.00px;font-size:15px;line-height:15px;color:#5c5c5c;">@</span>
<span class="t" style="left:2980.20px;top:1218.00px;font-size:15px;line-height:15px;color:#a0a0a0;letter-spacing:-0.101px;">25fps</span>
<span class="t" style="left:3073.30px;top:1218.00px;font-size:15px;line-height:15px;color:#5c5c5c;">X</span>
<span class="t" style="left:3087.30px;top:1218.00px;font-size:15px;line-height:15px;color:#a0a0a0;letter-spacing:-0.169px;">0.045</span>
<span class="t" style="left:3144.20px;top:1218.00px;font-size:15px;line-height:15px;color:#a0a0a0;">86</span>
<span class="t" style="left:3200.90px;top:1218.00px;font-size:15px;line-height:15px;color:#5c5c5c;">Y</span>
<span class="t" style="left:3216.30px;top:1218.00px;font-size:15px;line-height:15px;color:#a0a0a0;letter-spacing:-0.169px;">0.993</span>
<span class="t" style="left:3274.30px;top:1218.00px;font-size:15px;line-height:15px;color:#a0a0a0;letter-spacing:-0.544px;">1059</span>
<span class="t" style="left:3351.60px;top:1218.00px;font-size:15px;line-height:15px;color:#5c5c5c;">R</span>
<span class="t" style="left:3366.00px;top:1218.00px;font-size:15px;line-height:15px;color:#a0a0a0;letter-spacing:-0.169px;">0.745</span>
<span class="t" style="left:3420.40px;top:1218.00px;font-size:15px;line-height:15px;color:#5c5c5c;">G</span>
<span class="t" style="left:3437.40px;top:1218.00px;font-size:15px;line-height:15px;color:#a0a0a0;letter-spacing:-0.169px;">0.741</span>
<span class="t" style="left:3491.40px;top:1218.00px;font-size:15px;line-height:15px;color:#5c5c5c;">B</span>
<span class="t" style="left:3505.40px;top:1218.00px;font-size:15px;line-height:15px;color:#a0a0a0;letter-spacing:-0.169px;">0.741</span>
<svg style="left:3584.6px;top:1208.5px" width="36" height="36" viewBox="-18.0 -18.0 36 36"><g fill="none" stroke="#7e7e7e" stroke-width="1.4" stroke-linejoin="round" stroke-linecap="round"><path d="M-10.6 -2.4H-7.2L0.4 -8.8V8.8L-7.2 2.4H-10.6Z"/><path d="M2.8 -3.2Q4.4 0 2.8 3.2M5.2 -6Q8.4 0 5.2 6M7.6 -9Q12 0 7.6 9"/></g></svg>
<svg style="left:3623.0px;top:1208.5px" width="36" height="36" viewBox="-18.0 -18.0 36 36"><g fill="none" stroke="#7e7e7e" stroke-width="1.4"><circle r="9.4"/><circle r="1.6" fill="#7e7e7e" stroke="none"/></g></svg>
<svg style="left:3662.7px;top:1208.5px" width="36" height="36" viewBox="-18.0 -18.0 36 36"><circle r="7.6" fill="none" stroke="#7e7e7e" stroke-width="1.5"/><rect x="-1.6" y="-10.4" width="3.2" height="3.4" fill="#7e7e7e" transform="rotate(22)"/><rect x="-1.6" y="-10.4" width="3.2" height="3.4" fill="#7e7e7e" transform="rotate(67)"/><rect x="-1.6" y="-10.4" width="3.2" height="3.4" fill="#7e7e7e" transform="rotate(112)"/><rect x="-1.6" y="-10.4" width="3.2" height="3.4" fill="#7e7e7e" transform="rotate(157)"/><rect x="-1.6" y="-10.4" width="3.2" height="3.4" fill="#7e7e7e" transform="rotate(202)"/><rect x="-1.6" y="-10.4" width="3.2" height="3.4" fill="#7e7e7e" transform="rotate(247)"/><rect x="-1.6" y="-10.4" width="3.2" height="3.4" fill="#7e7e7e" transform="rotate(292)"/><rect x="-1.6" y="-10.4" width="3.2" height="3.4" fill="#7e7e7e" transform="rotate(337)"/></svg>
<svg style="left:3719.0px;top:1208.5px" width="36" height="36" viewBox="-18.0 -18.0 36 36"><g fill="none" stroke="#7e7e7e" stroke-width="1.6" stroke-linejoin="round"><path d="M-9.4 -5.2H-3.4L-2.2 -3H9.6V5.2H-9.4Z"/><path d="M-7.2 -0.4H9.4" /></g></svg>
<svg style="left:3758.1px;top:1208.5px" width="36" height="36" viewBox="-18.0 -18.0 36 36"><g stroke="#7e7e7e" stroke-width="1.29" fill="none" stroke-linecap="round" stroke-linejoin="round"><circle r="10.8"/></g><g transform="rotate(45)" fill="#7e7e7e"><path d="M-3 -7.6H3V-2.2L5.2 0.4V1.8H-5.2V0.4L-3 -2.2Z"/><rect x="-0.8" y="1.8" width="1.6" height="6.4"/></g></svg>
<svg style="left:3797.1px;top:1208.5px" width="36" height="36" viewBox="-18.0 -18.0 36 36"><g stroke="#7e7e7e" stroke-width="1.29" fill="none" stroke-linecap="round" stroke-linejoin="round"><circle r="10.8"/></g><text x="0" y="5.2" text-anchor="middle" font-size="14.5" font-weight="700" fill="#7e7e7e" font-family="Liberation Sans, sans-serif">?</text></svg>
<div style="left:2.4px;top:1252.4px;width:380.4px;height:876.6px;background:#202020;border-radius:5px 5px 0 0;"></div>
<div style="left:7.8px;top:1259.2px;width:165px;height:56.6px;background:#363636;border-radius:4px;"></div>
<div style="left:176px;top:1259.2px;width:201px;height:56.6px;background:#141414;border-radius:4px;"></div>
<span class="t" style="left:12.40px;top:1261.00px;font-size:15px;line-height:15px;color:#8a8a8a;-webkit-text-stroke:0.7px #8a8a8a;letter-spacing:0.641px;">Unlimited</span>
<span class="t" style="left:96.30px;top:1273.00px;font-size:30px;line-height:30px;color:#dadada;-webkit-text-stroke:0.25px #dadada;letter-spacing:0.363px;">59</span>
<span class="t" style="left:137.40px;top:1281.00px;font-size:20px;line-height:20px;color:#dadada;-webkit-text-stroke:0.25px #dadada;letter-spacing:-0.096px;">fps</span>
<span class="t" style="left:180.90px;top:1261.00px;font-size:15px;line-height:15px;color:#4c4c4c;-webkit-text-stroke:0.7px #4c4c4c;letter-spacing:0.305px;">Time</span>
<span class="t" style="left:250.80px;top:1273.00px;font-size:30px;line-height:30px;color:#bcbcbc;-webkit-text-stroke:0.25px #bcbcbc;letter-spacing:0.090px;">00:01:00</span>
<div style="left:384.7px;top:1252.4px;width:3454.3px;height:66px;background:#202020;border-radius:5px 5px 0 0;"></div>
<div style="left:384.7px;top:1318px;width:224px;height:811px;background:#202020;"></div>
<div style="left:608.5px;top:1318.4px;width:3218.5px;height:811px;background:#171717;"></div>
<div style="left:3827px;top:1318.4px;width:13px;height:811px;background:#202020;"></div>
<div style="left:608.5px;top:1318.4px;width:85.5px;height:7.6px;background:#202020;"></div>
<div style="left:3829px;top:1435px;width:9px;height:481px;background:#3c3c3c;border-radius:4.5px;"></div>
<div style="left:390.8px;top:1261.2px;width:3442.2px;height:51.8px;background:#151515;"></div>
<div style="left:694.4px;top:1272.2px;width:1357.2px;height:26.8px;background:#3c3c3c;border-radius:4px;"></div>
<div style="left:694.4px;top:1272.2px;width:8.6px;height:26.8px;background:#5c5c5c;border-radius:4px 0 0 4px;"></div>
<div style="left:2043px;top:1272.2px;width:8.6px;height:26.8px;background:#5c5c5c;border-radius:0 4px 4px 0;"></div>
<div style="left:694.4px;top:1310.1px;width:3138.6px;height:2.9px;background:#6c6c6c;"></div>
<svg style="left:0;top:0" width="3840" height="1320" viewBox="0 0 3840 1320"><path d="M405.1 1263.2V1269.8M405.1 1301.4V1307.8M441.3 1263.2V1269.8M441.3 1301.4V1307.8M459.4 1263.2V1269.8M459.4 1301.4V1307.8M477.6 1263.2V1269.8M477.6 1301.4V1307.8M495.7 1263.2V1269.8M495.7 1301.4V1307.8M531.9 1263.2V1269.8M531.9 1301.4V1307.8M550.0 1263.2V1269.8M550.0 1301.4V1307.8M568.2 1263.2V1269.8M568.2 1301.4V1307.8M586.3 1263.2V1269.8M586.3 1301.4V1307.8M622.5 1263.2V1269.8M622.5 1301.4V1307.8M640.6 1263.2V1269.8M640.6 1301.4V1307.8M658.8 1263.2V1269.8M658.8 1301.4V1307.8M676.9 1263.2V1269.8M676.9 1301.4V1307.8M713.1 1263.2V1269.8M713.1 1301.4V1307.8M731.2 1263.2V1269.8M731.2 1301.4V1307.8M749.4 1263.2V1269.8M749.4 1301.4V1307.8M767.5 1263.2V1269.8M767.5 1301.4V1307.8M803.7 1263.2V1269.8M803.7 1301.4V1307.8M821.8 1263.2V1269.8M821.8 1301.4V1307.8M840.0 1263.2V1269.8M840.0 1301.4V1307.8M858.1 1263.2V1269.8M858.1 1301.4V1307.8M894.3 1263.2V1269.8M894.3 1301.4V1307.8M912.4 1263.2V1269.8M912.4 1301.4V1307.8M930.6 1263.2V1269.8M930.6 1301.4V1307.8M948.7 1263.2V1269.8M948.7 1301.4V1307.8M984.9 1263.2V1269.8M984.9 1301.4V1307.8M1003.0 1263.2V1269.8M1003.0 1301.4V1307.8M1021.2 1263.2V1269.8M1021.2 1301.4V1307.8M1039.3 1263.2V1269.8M1039.3 1301.4V1307.8M1075.5 1263.2V1269.8M1075.5 1301.4V1307.8M1093.6 1263.2V1269.8M1093.6 1301.4V1307.8M1111.8 1263.2V1269.8M1111.8 1301.4V1307.8M1129.9 1263.2V1269.8M1129.9 1301.4V1307.8M1166.1 1263.2V1269.8M1166.1 1301.4V1307.8M1184.2 1263.2V1269.8M1184.2 1301.4V1307.8M1202.4 1263.2V1269.8M1202.4 1301.4V1307.8M1220.5 1263.2V1269.8M1220.5 1301.4V1307.8M1256.7 1263.2V1269.8M1256.7 1301.4V1307.8M1274.8 1263.2V1269.8M1274.8 1301.4V1307.8M1293.0 1263.2V1269.8M1293.0 1301.4V1307.8M1311.1 1263.2V1269.8M1311.1 1301.4V1307.8M1347.3 1263.2V1269.8M1347.3 1301.4V1307.8M1365.4 1263.2V1269.8M1365.4 1301.4V1307.8M1383.6 1263.2V1269.8M1383.6 1301.4V1307.8M1401.7 1263.2V1269.8M1401.7 1301.4V1307.8M1437.9 1263.2V1269.8M1437.9 1301.4V1307.8M1456.0 1263.2V1269.8M1456.0 1301.4V1307.8M1474.2 1263.2V1269.8M1474.2 1301.4V1307.8M1492.3 1263.2V1269.8M1492.3 1301.4V1307.8M1528.5 1263.2V1269.8M1528.5 1301.4V1307.8M1546.6 1263.2V1269.8M1546.6 1301.4V1307.8M1564.8 1263.2V1269.8M1564.8 1301.4V1307.8M1582.9 1263.2V1269.8M1582.9 1301.4V1307.8M1619.1 1263.2V1269.8M1619.1 1301.4V1307.8M1637.2 1263.2V1269.8M1637.2 1301.4V1307.8M1655.4 1263.2V1269.8M1655.4 1301.4V1307.8M1673.5 1263.2V1269.8M1673.5 1301.4V1307.8M1709.7 1263.2V1269.8M1709.7 1301.4V1307.8M1727.8 1263.2V1269.8M1727.8 1301.4V1307.8M1746.0 1263.2V1269.8M1746.0 1301.4V1307.8M1764.1 1263.2V1269.8M1764.1 1301.4V1307.8M1800.3 1263.2V1269.8M1800.3 1301.4V1307.8M1818.4 1263.2V1269.8M1818.4 1301.4V1307.8M1836.6 1263.2V1269.8M1836.6 1301.4V1307.8M1854.7 1263.2V1269.8M1854.7 1301.4V1307.8M1890.9 1263.2V1269.8M1890.9 1301.4V1307.8M1909.0 1263.2V1269.8M1909.0 1301.4V1307.8M1927.2 1263.2V1269.8M1927.2 1301.4V1307.8M1945.3 1263.2V1269.8M1945.3 1301.4V1307.8M1981.5 1263.2V1269.8M1981.5 1301.4V1307.8M1999.6 1263.2V1269.8M1999.6 1301.4V1307.8M2017.8 1263.2V1269.8M2017.8 1301.4V1307.8M2035.9 1263.2V1269.8M2035.9 1301.4V1307.8M2072.1 1263.2V1269.8M2072.1 1301.4V1307.8M2090.2 1263.2V1269.8M2090.2 1301.4V1307.8M2108.4 1263.2V1269.8M2108.4 1301.4V1307.8M2126.5 1263.2V1269.8M2126.5 1301.4V1307.8M2162.7 1263.2V1269.8M2162.7 1301.4V1307.8M2180.8 1263.2V1269.8M2180.8 1301.4V1307.8M2199.0 1263.2V1269.8M2199.0 1301.4V1307.8M2217.1 1263.2V1269.8M2217.1 1301.4V1307.8M2253.3 1263.2V1269.8M2253.3 1301.4V1307.8M2271.4 1263.2V1269.8M2271.4 1301.4V1307.8M2289.6 1263.2V1269.8M2289.6 1301.4V1307.8M2307.7 1263.2V1269.8M2307.7 1301.4V1307.8M2343.9 1263.2V1269.8M2343.9 1301.4V1307.8M2362.0 1263.2V1269.8M2362.0 1301.4V1307.8M2380.2 1263.2V1269.8M2380.2 1301.4V1307.8M2398.3 1263.2V1269.8M2398.3 1301.4V1307.8M2434.5 1263.2V1269.8M2434.5 1301.4V1307.8M2452.6 1263.2V1269.8M2452.6 1301.4V1307.8M2470.8 1263.2V1269.8M2470.8 1301.4V1307.8M2488.9 1263.2V1269.8M2488.9 1301.4V1307.8M2525.1 1263.2V1269.8M2525.1 1301.4V1307.8M2543.2 1263.2V1269.8M2543.2 1301.4V1307.8M2561.4 1263.2V1269.8M2561.4 1301.4V1307.8M2579.5 1263.2V1269.8M2579.5 1301.4V1307.8M2615.7 1263.2V1269.8M2615.7 1301.4V1307.8M2633.8 1263.2V1269.8M2633.8 1301.4V1307.8M2652.0 1263.2V1269.8M2652.0 1301.4V1307.8M2670.1 1263.2V1269.8M2670.1 1301.4V1307.8M2706.3 1263.2V1269.8M2706.3 1301.4V1307.8M2724.4 1263.2V1269.8M2724.4 1301.4V1307.8M2742.6 1263.2V1269.8M2742.6 1301.4V1307.8M2760.7 1263.2V1269.8M2760.7 1301.4V1307.8M2796.9 1263.2V1269.8M2796.9 1301.4V1307.8M2815.0 1263.2V1269.8M2815.0 1301.4V1307.8M2833.2 1263.2V1269.8M2833.2 1301.4V1307.8M2851.3 1263.2V1269.8M2851.3 1301.4V1307.8M2887.5 1263.2V1269.8M2887.5 1301.4V1307.8M2905.6 1263.2V1269.8M2905.6 1301.4V1307.8M2923.8 1263.2V1269.8M2923.8 1301.4V1307.8M2941.9 1263.2V1269.8M2941.9 1301.4V1307.8M2978.1 1263.2V1269.8M2978.1 1301.4V1307.8M2996.2 1263.2V1269.8M2996.2 1301.4V1307.8M3014.4 1263.2V1269.8M3014.4 1301.4V1307.8M3032.5 1263.2V1269.8M3032.5 1301.4V1307.8M3068.7 1263.2V1269.8M3068.7 1301.4V1307.8M3086.8 1263.2V1269.8M3086.8 1301.4V1307.8M3105.0 1263.2V1269.8M3105.0 1301.4V1307.8M3123.1 1263.2V1269.8M3123.1 1301.4V1307.8M3159.3 1263.2V1269.8M3159.3 1301.4V1307.8M3177.4 1263.2V1269.8M3177.4 1301.4V1307.8M3195.6 1263.2V1269.8M3195.6 1301.4V1307.8M3213.7 1263.2V1269.8M3213.7 1301.4V1307.8M3249.9 1263.2V1269.8M3249.9 1301.4V1307.8M3268.0 1263.2V1269.8M3268.0 1301.4V1307.8M3286.2 1263.2V1269.8M3286.2 1301.4V1307.8M3304.3 1263.2V1269.8M3304.3 1301.4V1307.8M3340.5 1263.2V1269.8M3340.5 1301.4V1307.8M3358.6 1263.2V1269.8M3358.6 1301.4V1307.8M3376.8 1263.2V1269.8M3376.8 1301.4V1307.8M3394.9 1263.2V1269.8M3394.9 1301.4V1307.8M3431.1 1263.2V1269.8M3431.1 1301.4V1307.8M3449.2 1263.2V1269.8M3449.2 1301.4V1307.8M3467.4 1263.2V1269.8M3467.4 1301.4V1307.8M3485.5 1263.2V1269.8M3485.5 1301.4V1307.8M3521.7 1263.2V1269.8M3521.7 1301.4V1307.8M3539.8 1263.2V1269.8M3539.8 1301.4V1307.8M3558.0 1263.2V1269.8M3558.0 1301.4V1307.8M3576.1 1263.2V1269.8M3576.1 1301.4V1307.8M3612.3 1263.2V1269.8M3612.3 1301.4V1307.8M3630.4 1263.2V1269.8M3630.4 1301.4V1307.8M3648.6 1263.2V1269.8M3648.6 1301.4V1307.8M3666.7 1263.2V1269.8M3666.7 1301.4V1307.8M3702.9 1263.2V1269.8M3702.9 1301.4V1307.8M3721.0 1263.2V1269.8M3721.0 1301.4V1307.8M3739.2 1263.2V1269.8M3739.2 1301.4V1307.8M3757.3 1263.2V1269.8M3757.3 1301.4V1307.8M3793.5 1263.2V1269.8M3793.5 1301.4V1307.8M3811.6 1263.2V1269.8M3811.6 1301.4V1307.8M3829.8 1263.2V1269.8M3829.8 1301.4V1307.8M423.2 1263.2V1273.2M423.2 1298.6V1307.8M513.8 1263.2V1273.2M513.8 1298.6V1307.8M604.4 1263.2V1273.2M604.4 1298.6V1307.8M785.6 1263.2V1273.2M785.6 1298.6V1307.8M876.2 1263.2V1273.2M876.2 1298.6V1307.8M966.8 1263.2V1273.2M966.8 1298.6V1307.8M1057.4 1263.2V1273.2M1057.4 1298.6V1307.8M1238.6 1263.2V1273.2M1238.6 1298.6V1307.8M1329.2 1263.2V1273.2M1329.2 1298.6V1307.8M1419.8 1263.2V1273.2M1419.8 1298.6V1307.8M1510.4 1263.2V1273.2M1510.4 1298.6V1307.8M1691.6 1263.2V1273.2M1691.6 1298.6V1307.8M1782.2 1263.2V1273.2M1782.2 1298.6V1307.8M1872.8 1263.2V1273.2M1872.8 1298.6V1307.8M1963.4 1263.2V1273.2M1963.4 1298.6V1307.8M2144.6 1263.2V1273.2M2144.6 1298.6V1307.8M2235.2 1263.2V1273.2M2235.2 1298.6V1307.8M2325.8 1263.2V1273.2M2325.8 1298.6V1307.8M2416.4 1263.2V1273.2M2416.4 1298.6V1307.8M2597.6 1263.2V1273.2M2597.6 1298.6V1307.8M2688.2 1263.2V1273.2M2688.2 1298.6V1307.8M2778.8 1263.2V1273.2M2778.8 1298.6V1307.8M2869.4 1263.2V1273.2M2869.4 1298.6V1307.8M3050.6 1263.2V1273.2M3050.6 1298.6V1307.8M3141.2 1263.2V1273.2M3141.2 1298.6V1307.8M3231.8 1263.2V1273.2M3231.8 1298.6V1307.8M3322.4 1263.2V1273.2M3322.4 1298.6V1307.8M3503.6 1263.2V1273.2M3503.6 1298.6V1307.8M3594.2 1263.2V1273.2M3594.2 1298.6V1307.8M3684.8 1263.2V1273.2M3684.8 1298.6V1307.8M3775.4 1263.2V1273.2M3775.4 1298.6V1307.8" stroke="#3e3e3e" stroke-width="1.6" fill="none"/><path d="M695.0 1263.2V1307.8M1148.0 1263.2V1307.8M1601.0 1263.2V1307.8M2054.0 1263.2V1307.8M2507.0 1263.2V1307.8M2960.0 1263.2V1307.8M3413.0 1263.2V1307.8" stroke="#3a3a3a" stroke-width="1.6" fill="none"/></svg>
<span class="t" style="left:411.87px;top:1280.00px;font-size:13.5px;line-height:13.5px;color:#8c8c8c;-webkit-text-stroke:0.25px #8c8c8c;">-15f</span>
<span class="t" style="left:502.47px;top:1280.00px;font-size:13.5px;line-height:13.5px;color:#8c8c8c;-webkit-text-stroke:0.25px #8c8c8c;">-10f</span>
<span class="t" style="left:596.82px;top:1280.00px;font-size:13.5px;line-height:13.5px;color:#8c8c8c;-webkit-text-stroke:0.25px #8c8c8c;">-5f</span>
<span class="t" style="left:677.90px;top:1280.00px;font-size:13.5px;line-height:13.5px;color:#8c8c8c;-webkit-text-stroke:0.25px #8c8c8c;letter-spacing:0.201px;">00:00</span>
<span class="t" style="left:780.27px;top:1280.00px;font-size:13.5px;line-height:13.5px;color:#8c8c8c;-webkit-text-stroke:0.25px #8c8c8c;">5f</span>
<span class="t" style="left:867.11px;top:1280.00px;font-size:13.5px;line-height:13.5px;color:#8c8c8c;-webkit-text-stroke:0.25px #8c8c8c;">10f</span>
<span class="t" style="left:957.71px;top:1280.00px;font-size:13.5px;line-height:13.5px;color:#8c8c8c;-webkit-text-stroke:0.25px #8c8c8c;">15f</span>
<span class="t" style="left:1048.31px;top:1280.00px;font-size:13.5px;line-height:13.5px;color:#8c8c8c;-webkit-text-stroke:0.25px #8c8c8c;">20f</span>
<span class="t" style="left:1233.27px;top:1280.00px;font-size:13.5px;line-height:13.5px;color:#8c8c8c;-webkit-text-stroke:0.25px #8c8c8c;">5f</span>
<span class="t" style="left:1320.11px;top:1280.00px;font-size:13.5px;line-height:13.5px;color:#8c8c8c;-webkit-text-stroke:0.25px #8c8c8c;">10f</span>
<span class="t" style="left:1410.71px;top:1280.00px;font-size:13.5px;line-height:13.5px;color:#8c8c8c;-webkit-text-stroke:0.25px #8c8c8c;">15f</span>
<span class="t" style="left:1501.31px;top:1280.00px;font-size:13.5px;line-height:13.5px;color:#8c8c8c;-webkit-text-stroke:0.25px #8c8c8c;">20f</span>
<span class="t" style="left:1583.90px;top:1280.00px;font-size:13.5px;line-height:13.5px;color:#8c8c8c;-webkit-text-stroke:0.25px #8c8c8c;letter-spacing:0.201px;">00:02</span>
<span class="t" style="left:1686.27px;top:1280.00px;font-size:13.5px;line-height:13.5px;color:#8c8c8c;-webkit-text-stroke:0.25px #8c8c8c;">5f</span>
<span class="t" style="left:1773.11px;top:1280.00px;font-size:13.5px;line-height:13.5px;color:#8c8c8c;-webkit-text-stroke:0.25px #8c8c8c;">10f</span>
<span class="t" style="left:1863.71px;top:1280.00px;font-size:13.5px;line-height:13.5px;color:#8c8c8c;-webkit-text-stroke:0.25px #8c8c8c;">15f</span>
<span class="t" style="left:1954.31px;top:1280.00px;font-size:13.5px;line-height:13.5px;color:#8c8c8c;-webkit-text-stroke:0.25px #8c8c8c;">20f</span>
<span class="t" style="left:2036.90px;top:1280.00px;font-size:13.5px;line-height:13.5px;color:#8c8c8c;-webkit-text-stroke:0.25px #8c8c8c;letter-spacing:0.201px;">00:03</span>
<span class="t" style="left:2139.27px;top:1280.00px;font-size:13.5px;line-height:13.5px;color:#8c8c8c;-webkit-text-stroke:0.25px #8c8c8c;">5f</span>
<span class="t" style="left:2226.11px;top:1280.00px;font-size:13.5px;line-height:13.5px;color:#8c8c8c;-webkit-text-stroke:0.25px #8c8c8c;">10f</span>
<span class="t" style="left:2316.71px;top:1280.00px;font-size:13.5px;line-height:13.5px;color:#8c8c8c;-webkit-text-stroke:0.25px #8c8c8c;">15f</span>
<span class="t" style="left:2407.31px;top:1280.00px;font-size:13.5px;line-height:13.5px;color:#8c8c8c;-webkit-text-stroke:0.25px #8c8c8c;">20f</span>
<span class="t" style="left:2489.90px;top:1280.00px;font-size:13.5px;line-height:13.5px;color:#8c8c8c;-webkit-text-stroke:0.25px #8c8c8c;letter-spacing:0.201px;">00:04</span>
<span class="t" style="left:2592.27px;top:1280.00px;font-size:13.5px;line-height:13.5px;color:#8c8c8c;-webkit-text-stroke:0.25px #8c8c8c;">5f</span>
<span class="t" style="left:2679.11px;top:1280.00px;font-size:13.5px;line-height:13.5px;color:#8c8c8c;-webkit-text-stroke:0.25px #8c8c8c;">10f</span>
<span class="t" style="left:2769.71px;top:1280.00px;font-size:13.5px;line-height:13.5px;color:#8c8c8c;-webkit-text-stroke:0.25px #8c8c8c;">15f</span>
<span class="t" style="left:2860.31px;top:1280.00px;font-size:13.5px;line-height:13.5px;color:#8c8c8c;-webkit-text-stroke:0.25px #8c8c8c;">20f</span>
<span class="t" style="left:2942.90px;top:1280.00px;font-size:13.5px;line-height:13.5px;color:#8c8c8c;-webkit-text-stroke:0.25px #8c8c8c;letter-spacing:0.201px;">00:05</span>
<span class="t" style="left:3045.27px;top:1280.00px;font-size:13.5px;line-height:13.5px;color:#8c8c8c;-webkit-text-stroke:0.25px #8c8c8c;">5f</span>
<span class="t" style="left:3132.11px;top:1280.00px;font-size:13.5px;line-height:13.5px;color:#8c8c8c;-webkit-text-stroke:0.25px #8c8c8c;">10f</span>
<span class="t" style="left:3222.71px;top:1280.00px;font-size:13.5px;line-height:13.5px;color:#8c8c8c;-webkit-text-stroke:0.25px #8c8c8c;">15f</span>
<span class="t" style="left:3313.31px;top:1280.00px;font-size:13.5px;line-height:13.5px;color:#8c8c8c;-webkit-text-stroke:0.25px #8c8c8c;">20f</span>
<span class="t" style="left:3395.90px;top:1280.00px;font-size:13.5px;line-height:13.5px;color:#8c8c8c;-webkit-text-stroke:0.25px #8c8c8c;letter-spacing:0.201px;">00:06</span>
<span class="t" style="left:3498.27px;top:1280.00px;font-size:13.5px;line-height:13.5px;color:#8c8c8c;-webkit-text-stroke:0.25px #8c8c8c;">5f</span>
<span class="t" style="left:3585.11px;top:1280.00px;font-size:13.5px;line-height:13.5px;color:#8c8c8c;-webkit-text-stroke:0.25px #8c8c8c;">10f</span>
<span class="t" style="left:3675.71px;top:1280.00px;font-size:13.5px;line-height:13.5px;color:#8c8c8c;-webkit-text-stroke:0.25px #8c8c8c;">15f</span>
<span class="t" style="left:3766.31px;top:1280.00px;font-size:13.5px;line-height:13.5px;color:#8c8c8c;-webkit-text-stroke:0.25px #8c8c8c;">20f</span>
<svg style="left:1362px;top:1276px;" width="24" height="18" viewBox="0 0 24 18"><path d="M9.6 3.4V14.2L3 8.8Z M13.4 3.4V14.2L20 8.8Z" fill="#5a5a5a"/></svg>
<div style="left:696px;top:1320px;width:3131px;height:29.8px;background:#4f596a;border-radius:0 0 0 4px;"></div>
<span class="t" style="left:2233.75px;top:1325.00px;font-size:18px;line-height:18px;color:#f4f4f4;-webkit-text-stroke:0.25px #f4f4f4;letter-spacing:0.384px;">Material</span>
<div style="left:696px;top:1351px;width:3131px;height:38px;background:#59624b;border-radius:4px 0 0 4px;"></div>
<span class="t" style="left:2119.45px;top:1360.00px;font-size:18px;line-height:18px;color:#f4f4f4;-webkit-text-stroke:0.25px #f4f4f4;letter-spacing:0.301px;">3D Object : Layer1, HalfAndHalf.obj</span>
<div style="left:696px;top:1947.8px;width:3131px;height:38px;background:#4f596a;border-radius:4px 0 0 4px;"></div>
<span class="t" style="left:2224.80px;top:1957.00px;font-size:18px;line-height:18px;color:#f4f4f4;-webkit-text-stroke:0.25px #f4f4f4;letter-spacing:0.660px;">concrete5</span>
<div style="left:696px;top:1987.2px;width:3131px;height:37.6px;background:#1e5c66;border-radius:4px 0 0 4px;"></div>
<span class="t" style="left:2225.30px;top:1996.00px;font-size:18px;line-height:18px;color:#f4f4f4;-webkit-text-stroke:0.25px #f4f4f4;letter-spacing:0.549px;">Subdivide</span>
<div style="left:696px;top:2026px;width:3131px;height:37.6px;background:#4f596a;border-radius:4px 0 0 4px;"></div>
<span class="t" style="left:2197.80px;top:2035.00px;font-size:18px;line-height:18px;color:#f4f4f4;-webkit-text-stroke:0.25px #f4f4f4;letter-spacing:0.527px;">Metallic Material</span>
<div style="left:696px;top:2064.6px;width:3131px;height:37.8px;background:#00243f;border-radius:4px 0 0 4px;"></div>
<span class="t" style="left:2218.30px;top:2074.00px;font-size:18px;line-height:18px;color:#5c7088;-webkit-text-stroke:0.25px #5c7088;letter-spacing:0.450px;">Path Tracer</span>
<div style="left:696px;top:2103.2px;width:3131px;height:25.8px;background:#00243f;border-radius:4px 0 0 4px;"></div>
<span class="t" style="left:2212.30px;top:2106.00px;font-size:18px;line-height:18px;color:#5c7088;-webkit-text-stroke:0.25px #5c7088;letter-spacing:0.497px;">Smart Tracer</span>
<svg style="left:0;top:0" width="3840" height="2130" viewBox="0 0 3840 2130"><defs><clipPath id="cvc"><rect x="608" y="1383" width="3219" height="572"/></clipPath></defs><g clip-path="url(#cvc)"><path d="M696.8 1389V1948M1149.8 1389V1948M1602.8 1389V1948M2055.8 1389V1948M2508.8 1389V1948M2961.8 1389V1948M3414.8 1389V1948" stroke="#383838" stroke-width="1.5" fill="none"/><path d="M612 1404.8H3827M612 1505.6H3827M612 1556H3827M612 1590.8H3827M612 1621H3827M612 1651.2H3827M612 1681.8H3827M612 1712H3827M612 1805.8H3827M612 1846.8H3827M612 1887.2H3827" stroke="#363636" stroke-width="1.5" fill="none"/><path d="M612 1455.2H3827M612 1742.3H3827M612 1927.8H3827" stroke="#505050" stroke-width="1.5" fill="none"/><rect x="1038.7" y="1390.8" width="471.3" height="557.2" fill="#14223f" fill-opacity="0.88" stroke="#c2c8d2" stroke-width="1.8"/><path d="M695.0 1462.6 C839.96 1462.4 948.6800000000001 1461.2 1093.64 1460.2 C1311.08 1457.6 1601.0 1448 1818.44 1447.6 H3827" stroke="#96362d" stroke-width="1.5" fill="none"/><path d="M695.0 1677.6 C858.08 1677.6 975.86 1673.6 1039.28 1669.4 C1102.7 1658 1100.888 1647.7 1166.12 1647.7 C1233.164 1647.7 1282.088 1649.8 1347.3200000000002 1677.6 C1379.9360000000001 1673.6 1401.68 1673.6 1437.92 1677.6 H3827" stroke="#597332" stroke-width="1.5" fill="none"/><path d="M695.0 1927.8 C839.96 1927.8 939.62 1927.2 1057.4 1915.2 L1347.3200000000002 1803.2 C1419.8000000000002 1785.6 1448.792 1776.9 1510.4 1776.9 C1573.8200000000002 1776.9 1673.48 1780.4 1818.44 1780.4 H3827" stroke="#374abc" stroke-width="1.5" fill="none"/><path d="M951.7 1461.6L1093.6 1460.2" stroke="#c8c8c8" stroke-width="1" stroke-dasharray="3 2.4" fill="none"/><rect x="-9" y="-2.3" width="18" height="4.6" fill="#d8d8d8" transform="translate(951.7,1461.6) rotate(-0.6)"/><path d="M1345.9 1456.0L1093.6 1460.2" stroke="#c8c8c8" stroke-width="1" stroke-dasharray="3 2.4" fill="none"/><rect x="-9" y="-2.3" width="18" height="4.6" fill="#b8c2d6" transform="translate(1345.9,1456.0) rotate(179.0)"/><path d="M975.0 1679.0L1039.3 1669.4" stroke="#c8c8c8" stroke-width="1" stroke-dasharray="3 2.4" fill="none"/><rect x="-9" y="-2.3" width="18" height="4.6" fill="#d8d8d8" transform="translate(975.0,1679.0) rotate(-8.5)"/><path d="M1103.7 1657.8L1039.3 1669.4" stroke="#c8c8c8" stroke-width="1" stroke-dasharray="3 2.4" fill="none"/><rect x="-9" y="-2.3" width="18" height="4.6" fill="#b8c2d6" transform="translate(1103.7,1657.8) rotate(169.8)"/><path d="M1099.6 1647.7L1166.1 1647.7" stroke="#c8c8c8" stroke-width="1" stroke-dasharray="3 2.4" fill="none"/><rect x="-9" y="-2.3" width="18" height="4.6" fill="#b8c2d6" transform="translate(1099.6,1647.7) rotate(0.0)"/><path d="M1233.4 1647.7L1166.1 1647.7" stroke="#c8c8c8" stroke-width="1" stroke-dasharray="3 2.4" fill="none"/><rect x="-9" y="-2.3" width="18" height="4.6" fill="#b8c2d6" transform="translate(1233.4,1647.7) rotate(180.0)"/><path d="M1282.3 1649.7L1347.3 1677.6" stroke="#c8c8c8" stroke-width="1" stroke-dasharray="3 2.4" fill="none"/><rect x="-9" y="-2.3" width="18" height="4.6" fill="#b8c2d6" transform="translate(1282.3,1649.7) rotate(23.2)"/><path d="M1379.7 1673.2L1347.3 1677.6" stroke="#c8c8c8" stroke-width="1" stroke-dasharray="3 2.4" fill="none"/><rect x="-9" y="-2.3" width="18" height="4.6" fill="#b8c2d6" transform="translate(1379.7,1673.2) rotate(172.3)"/><path d="M1407.5 1673.2L1437.9 1677.6" stroke="#c8c8c8" stroke-width="1" stroke-dasharray="3 2.4" fill="none"/><rect x="-9" y="-2.3" width="18" height="4.6" fill="#b8c2d6" transform="translate(1407.5,1673.2) rotate(8.2)"/><path d="M1453.0 1677.6L1437.9 1677.6" stroke="#c8c8c8" stroke-width="1" stroke-dasharray="3 2.4" fill="none"/><rect x="-9" y="-2.3" width="18" height="4.6" fill="#b8c2d6" transform="translate(1453.0,1677.6) rotate(180.0)"/><path d="M1470.6 1677.6L1492.3 1677.6" stroke="#c8c8c8" stroke-width="1" stroke-dasharray="3 2.4" fill="none"/><rect x="-9" y="-2.3" width="18" height="4.6" fill="#b8c2d6" transform="translate(1470.6,1677.6) rotate(0.0)"/><path d="M939.6 1927.3L1057.4 1915.2" stroke="#c8c8c8" stroke-width="1" stroke-dasharray="3 2.4" fill="none"/><rect x="-9" y="-2.3" width="18" height="4.6" fill="#d8d8d8" transform="translate(939.6,1927.3) rotate(-5.9)"/><path d="M1421.0 1785.5L1347.3 1803.2" stroke="#c8c8c8" stroke-width="1" stroke-dasharray="3 2.4" fill="none"/><rect x="-9" y="-2.3" width="18" height="4.6" fill="#b8c2d6" transform="translate(1421.0,1785.5) rotate(166.5)"/><path d="M1447.8 1776.9L1510.4 1776.9" stroke="#c8c8c8" stroke-width="1" stroke-dasharray="3 2.4" fill="none"/><rect x="-9" y="-2.3" width="18" height="4.6" fill="#b8c2d6" transform="translate(1447.8,1776.9) rotate(0.0)"/><path d="M1574.0 1776.9L1510.4 1776.9" stroke="#c8c8c8" stroke-width="1" stroke-dasharray="3 2.4" fill="none"/><rect x="-9" y="-2.3" width="18" height="4.6" fill="#d8d8d8" transform="translate(1574.0,1776.9) rotate(180.0)"/><path d="M689.2 1456.0H700.8L695.0 1462.6L700.8 1469.2H689.2L695.0 1462.6Z" fill="#b4b4b4"/><path d="M1087.8 1453.6H1099.4L1093.6 1460.2L1099.4 1466.8H1087.8L1093.6 1460.2Z" fill="#e8ecf4"/><path d="M1812.6 1441.0H1824.2L1818.4 1447.6L1824.2 1454.2H1812.6L1818.4 1447.6Z" fill="#b4b4b4"/><path d="M689.2 1671.0H700.8L695.0 1677.6L700.8 1684.2H689.2L695.0 1677.6Z" fill="#b4b4b4"/><path d="M1033.5 1662.8H1045.1L1039.3 1669.4L1045.1 1676.0H1033.5L1039.3 1669.4Z" fill="#e8ecf4"/><path d="M1160.3 1641.1H1171.9L1166.1 1647.7L1171.9 1654.3H1160.3L1166.1 1647.7Z" fill="#e8ecf4"/><path d="M1341.5 1671.0H1353.1L1347.3 1677.6L1353.1 1684.2H1341.5L1347.3 1677.6Z" fill="#e8ecf4"/><path d="M1432.1 1671.0H1443.7L1437.9 1677.6L1443.7 1684.2H1432.1L1437.9 1677.6Z" fill="#e8ecf4"/><path d="M1486.5 1671.0H1498.1L1492.3 1677.6L1498.1 1684.2H1486.5L1492.3 1677.6Z" fill="#e8ecf4"/><path d="M689.2 1921.2H700.8L695.0 1927.8L700.8 1934.4H689.2L695.0 1927.8Z" fill="#b4b4b4"/><path d="M1341.5 1796.6H1353.1L1347.3 1803.2L1353.1 1809.8H1341.5L1347.3 1803.2Z" fill="#e8ecf4"/><path d="M1504.6 1770.3H1516.2L1510.4 1776.9L1516.2 1783.5H1504.6L1510.4 1776.9Z" fill="#e8ecf4"/><path d="M1812.6 1773.8H1824.2L1818.4 1780.4L1824.2 1787.0H1812.6L1818.4 1780.4Z" fill="#b4b4b4"/><path d="M1050.8 1919.8H1064.0L1057.4 1907.8Z" fill="#c8d4f4"/><rect x="1032.7" y="1384.8" width="12" height="12" rx="1.5" fill="#d4d4d4"/><rect x="1504.0" y="1384.8" width="12" height="12" rx="1.5" fill="#d4d4d4"/><rect x="1032.7" y="1942.0" width="12" height="12" rx="1.5" fill="#d4d4d4"/><rect x="1504.0" y="1942.0" width="12" height="12" rx="1.5" fill="#d4d4d4"/></g></svg>
<span class="t" style="left:620.30px;top:1409.00px;font-size:13.5px;line-height:13.5px;color:#8a8a8a;-webkit-text-stroke:0.25px #8a8a8a;">1.0</span>
<span class="t" style="left:620.30px;top:1560.00px;font-size:13.5px;line-height:13.5px;color:#8a8a8a;-webkit-text-stroke:0.25px #8a8a8a;">-2.0</span>
<span class="t" style="left:620.30px;top:1595.00px;font-size:13.5px;line-height:13.5px;color:#8a8a8a;-webkit-text-stroke:0.25px #8a8a8a;">1.0</span>
<span class="t" style="left:620.30px;top:1745.00px;font-size:13.5px;line-height:13.5px;color:#8a8a8a;-webkit-text-stroke:0.25px #8a8a8a;">0.0</span>
<span class="t" style="left:620.30px;top:1809.00px;font-size:13.5px;line-height:13.5px;color:#8a8a8a;-webkit-text-stroke:0.25px #8a8a8a;">300.0</span>
<span class="t" style="left:620.30px;top:1931.00px;font-size:13.5px;line-height:13.5px;color:#8a8a8a;-webkit-text-stroke:0.25px #8a8a8a;">0.0</span>
<svg style="left:0;top:0" width="3840" height="1400" viewBox="0 0 3840 1400"><path d="M695.0 1363.4L701.6 1370L695.0 1376.6L688.4 1370Z" fill="#fff"/><path d="M1818.4 1363.8L1824.6 1370L1818.4 1376.2L1812.2 1370Z" fill="#fff"/><path d="M1039.3 1356.6L1050.3 1367.6L1039.3 1378.6L1028.3 1367.6Z" fill="#59624b" stroke="#fff" stroke-width="1.7" stroke-linejoin="round"/><path d="M1039.3 1361.6L1045.3 1367.6L1039.3 1373.6L1033.3 1367.6Z" fill="#fff"/><path d="M1057.4 1356.6L1068.4 1367.6L1057.4 1378.6L1046.4 1367.6Z" fill="#59624b" stroke="#fff" stroke-width="1.7" stroke-linejoin="round"/><path d="M1057.4 1361.6L1063.4 1367.6L1057.4 1373.6L1051.4 1367.6Z" fill="#fff"/><path d="M1093.6 1356.6L1104.6 1367.6L1093.6 1378.6L1082.6 1367.6Z" fill="#59624b" stroke="#fff" stroke-width="1.7" stroke-linejoin="round"/><path d="M1093.6 1361.6L1099.6 1367.6L1093.6 1373.6L1087.6 1367.6Z" fill="#fff"/><path d="M1166.1 1356.6L1177.1 1367.6L1166.1 1378.6L1155.1 1367.6Z" fill="#59624b" stroke="#fff" stroke-width="1.7" stroke-linejoin="round"/><path d="M1166.1 1361.6L1172.1 1367.6L1166.1 1373.6L1160.1 1367.6Z" fill="#fff"/><path d="M1347.3 1356.6L1358.3 1367.6L1347.3 1378.6L1336.3 1367.6Z" fill="#59624b" stroke="#fff" stroke-width="1.7" stroke-linejoin="round"/><path d="M1347.3 1361.6L1353.3 1367.6L1347.3 1373.6L1341.3 1367.6Z" fill="#fff"/><path d="M1437.9 1356.6L1448.9 1367.6L1437.9 1378.6L1426.9 1367.6Z" fill="#59624b" stroke="#fff" stroke-width="1.7" stroke-linejoin="round"/><path d="M1437.9 1361.6L1443.9 1367.6L1437.9 1373.6L1431.9 1367.6Z" fill="#fff"/><path d="M1492.3 1356.6L1503.3 1367.6L1492.3 1378.6L1481.3 1367.6Z" fill="#59624b" stroke="#fff" stroke-width="1.7" stroke-linejoin="round"/><path d="M1492.3 1361.6L1498.3 1367.6L1492.3 1373.6L1486.3 1367.6Z" fill="#fff"/><path d="M1510.4 1356.6L1521.4 1367.6L1510.4 1378.6L1499.4 1367.6Z" fill="#59624b" stroke="#fff" stroke-width="1.7" stroke-linejoin="round"/><path d="M1510.4 1361.6L1516.4 1367.6L1510.4 1373.6L1504.4 1367.6Z" fill="#fff"/></svg>
<div style="left:4px;top:1320px;width:6px;height:809px;background:#585858;"></div>
<div style="left:10.9px;top:1320px;width:9.4px;height:744.6px;background:#59624b;"></div>
<div style="left:20.6px;top:1320px;width:356px;height:29.6px;background:#505a6b;border-radius:0 0 4px 0;"></div>
<span class="t" style="left:63.30px;top:1324.00px;font-size:18px;line-height:18px;color:#ffffff;-webkit-text-stroke:0.25px #ffffff;letter-spacing:0.434px;">Material</span>
<svg style="left:231px;top:1321px;" width="22" height="22" viewBox="0 0 22 22"><g fill="none" stroke="#d4d4d4" stroke-linejoin="round" opacity="1"><rect x="1.2" y="1" width="17.6" height="17.4" rx="2.6" stroke-width="1.9"/><path d="M5 10.2L8.4 13.4L15 5.8" stroke-width="1.8"/></g></svg>
<div style="left:390.2px;top:1320px;width:213.8px;height:29.4px;background:#333333;border-radius:0 0 3px 3px;"></div>
<span class="t" style="left:410.60px;top:1322.00px;font-size:18px;line-height:18px;color:#c2c2c2;-webkit-text-stroke:0.25px #c2c2c2;letter-spacing:0.861px;">00:00:00 - 00:30:00</span>
<div style="left:10.9px;top:1351.2px;width:365.6px;height:37.4px;background:#59624b;border-radius:0 4px 4px 0;"></div>
<svg style="left:22px;top:1362px;" width="20" height="16" viewBox="0 0 20 16"><path d="M2.2 3.2H15.8L9 13Z" fill="#d4d4d4"/></svg>
<svg style="left:231px;top:1360px;" width="22" height="22" viewBox="0 0 22 22"><g fill="none" stroke="#c8c8c8" stroke-linejoin="round" opacity="0.75"><rect x="1.2" y="1" width="17.6" height="17.4" rx="2.6" stroke-width="1.9"/><path d="M5 10.2L8.4 13.4L15 5.8" stroke-width="1.8"/></g></svg>
<svg style="left:270px;top:1360px;" width="20" height="20" viewBox="0 0 20 20"><path d="M9.6 4.2L15.2 9.8L9.6 15.4L4 9.8Z" fill="#e8e8e8" opacity="0.85"/></svg>
<div style="left:50px;top:1352px;width:289px;height:36px;overflow:hidden;background:none">
<span class="t" style="left:3.60px;top:10.00px;font-size:18px;line-height:18px;color:#ffffff;-webkit-text-stroke:0.25px #ffffff;letter-spacing:0.338px;">3D Object : Layer1, HalfAndHalf.obj</span>
</div>
<div style="left:390px;top:1351.2px;width:214px;height:37.6px;background:#333333;border-radius:3px;"></div>
<span class="t" style="left:410.80px;top:1361.00px;font-size:18px;line-height:18px;color:#c2c2c2;-webkit-text-stroke:0.25px #c2c2c2;letter-spacing:0.861px;">00:00:00 - 00:30:00</span>
<div style="left:20.4px;top:1389.8px;width:356.2px;height:185px;background:#282828;border-radius:4px;"></div>
<svg style="left:33px;top:1398.8px;" width="16" height="14" viewBox="0 0 16 14"><path d="M2.6 2.8H13.6L8.1 9.8Z" fill="#9c9c9c"/></svg>
<span class="t" style="left:72.20px;top:1398.00px;font-size:13.5px;line-height:13.5px;color:#9c9c9c;-webkit-text-stroke:0.25px #9c9c9c;letter-spacing:-0.020px;">Position X</span>
<svg style="left:290px;top:1394.8px;" width="60" height="20" viewBox="0 0 60 20"><g fill="none" stroke="#b4b4b4" stroke-width="1.7" stroke-linecap="round" stroke-linejoin="round"><path d="M12.8 4.6L6.8 9.8L12.8 15"/><path d="M44.8 4.6L50.8 9.8L44.8 15"/></g><path d="M28.7 4.4L34.3 9.8L28.7 15.2L23.1 9.8Z" fill="#b4b4b4"/></svg>
<div style="left:20.4px;top:1576.2px;width:356.2px;height:185px;background:#282828;border-radius:4px;"></div>
<svg style="left:33px;top:1585.2px;" width="16" height="14" viewBox="0 0 16 14"><path d="M2.6 2.8H13.6L8.1 9.8Z" fill="#9c9c9c"/></svg>
<span class="t" style="left:72.20px;top:1585.00px;font-size:13.5px;line-height:13.5px;color:#9c9c9c;-webkit-text-stroke:0.25px #9c9c9c;letter-spacing:0.005px;">Position Y</span>
<svg style="left:290px;top:1581.2px;" width="60" height="20" viewBox="0 0 60 20"><g fill="none" stroke="#b4b4b4" stroke-width="1.7" stroke-linecap="round" stroke-linejoin="round"><path d="M12.8 4.6L6.8 9.8L12.8 15"/><path d="M44.8 4.6L50.8 9.8L44.8 15"/></g><path d="M28.7 4.4L34.3 9.8L28.7 15.2L23.1 9.8Z" fill="#b4b4b4"/></svg>
<div style="left:20.4px;top:1762.4px;width:356.2px;height:185px;background:#282828;border-radius:4px;"></div>
<svg style="left:33px;top:1771.4px;" width="16" height="14" viewBox="0 0 16 14"><path d="M2.6 2.8H13.6L8.1 9.8Z" fill="#9c9c9c"/></svg>
<span class="t" style="left:72.20px;top:1771.00px;font-size:13.5px;line-height:13.5px;color:#9c9c9c;-webkit-text-stroke:0.25px #9c9c9c;letter-spacing:0.014px;">Rotation Bank</span>
<svg style="left:290px;top:1767.4px;" width="60" height="20" viewBox="0 0 60 20"><g fill="none" stroke="#b4b4b4" stroke-width="1.7" stroke-linecap="round" stroke-linejoin="round"><path d="M12.8 4.6L6.8 9.8L12.8 15"/><path d="M44.8 4.6L50.8 9.8L44.8 15"/></g><path d="M28.7 4.4L34.3 9.8L28.7 15.2L23.1 9.8Z" fill="#b4b4b4"/></svg>
<div style="left:20.6px;top:1948px;width:355.9px;height:37.9px;background:#505a6b;border-radius:0 4px 4px 0;"></div>
<span class="t" style="left:63.30px;top:1959.00px;font-size:18px;line-height:18px;color:#fff;-webkit-text-stroke:0.25px #fff;letter-spacing:0.660px;">concrete5</span>
<svg style="left:231px;top:1956.6px;" width="22" height="22" viewBox="0 0 22 22"><g fill="none" stroke="#d4d4d4" stroke-linejoin="round" opacity="1"><rect x="1.2" y="1" width="17.6" height="17.4" rx="2.6" stroke-width="1.9"/><path d="M5 10.2L8.4 13.4L15 5.8" stroke-width="1.8"/></g></svg>
<div style="left:390px;top:1948px;width:214px;height:37.6px;background:#333333;border-radius:3px;"></div>
<span class="t" style="left:410.80px;top:1958.00px;font-size:18px;line-height:18px;color:#c2c2c2;-webkit-text-stroke:0.25px #c2c2c2;letter-spacing:0.861px;">00:00:00 - 00:30:00</span>
<div style="left:343.2px;top:1948px;width:33.3px;height:37.9px;background:#b01aa0;border-radius:0 4px 4px 0;"></div>
<svg style="left:349px;top:1957px;" width="22" height="20" viewBox="0 0 22 20"><g fill="none" stroke="#f0c8ee" stroke-width="1.5"><circle cx="10.6" cy="10" r="6.6"/><path d="M6.4 8.6A4.4 4.4 0 0 1 10 5.6" stroke-width="1.2"/></g></svg>
<div style="left:20.6px;top:1987.1px;width:355.9px;height:37.9px;background:#1f5c66;border-radius:0 4px 4px 0;"></div>
<span class="t" style="left:63.30px;top:1998.00px;font-size:18px;line-height:18px;color:#fff;-webkit-text-stroke:0.25px #fff;letter-spacing:0.538px;">Subdivide</span>
<svg style="left:231px;top:1995.6999999999998px;" width="22" height="22" viewBox="0 0 22 22"><g fill="none" stroke="#d4d4d4" stroke-linejoin="round" opacity="1"><rect x="1.2" y="1" width="17.6" height="17.4" rx="2.6" stroke-width="1.9"/><path d="M5 10.2L8.4 13.4L15 5.8" stroke-width="1.8"/></g></svg>
<div style="left:390px;top:1987.1px;width:214px;height:37.6px;background:#333333;border-radius:3px;"></div>
<span class="t" style="left:410.80px;top:1997.00px;font-size:18px;line-height:18px;color:#c2c2c2;-webkit-text-stroke:0.25px #c2c2c2;letter-spacing:0.861px;">00:00:00 - 00:30:00</span>
<div style="left:20.6px;top:2026.2px;width:355.9px;height:37.9px;background:#505a6b;border-radius:0 4px 4px 0;"></div>
<span class="t" style="left:63.30px;top:2037.00px;font-size:18px;line-height:18px;color:#fff;-webkit-text-stroke:0.25px #fff;letter-spacing:0.527px;">Metallic Material</span>
<svg style="left:231px;top:2034.8px;" width="22" height="22" viewBox="0 0 22 22"><g fill="none" stroke="#d4d4d4" stroke-linejoin="round" opacity="1"><rect x="1.2" y="1" width="17.6" height="17.4" rx="2.6" stroke-width="1.9"/><path d="M5 10.2L8.4 13.4L15 5.8" stroke-width="1.8"/></g></svg>
<div style="left:390px;top:2026.2px;width:214px;height:37.6px;background:#333333;border-radius:3px;"></div>
<span class="t" style="left:410.80px;top:2036.00px;font-size:18px;line-height:18px;color:#c2c2c2;-webkit-text-stroke:0.25px #c2c2c2;letter-spacing:0.861px;">00:00:00 - 00:30:00</span>
<div style="left:10.9px;top:2065.3px;width:365.6px;height:37.9px;background:#002c4e;border-radius:0 4px 4px 0;"></div>
<span class="t" style="left:53.20px;top:2077.00px;font-size:18px;line-height:18px;color:#5a6f8e;-webkit-text-stroke:0.25px #5a6f8e;letter-spacing:0.432px;">Path Tracer</span>
<svg style="left:231px;top:2073.9px;" width="22" height="22" viewBox="0 0 22 22"><g fill="none" stroke="#4e6e8a" stroke-linejoin="round" opacity="1"><rect x="1.2" y="1" width="17.6" height="17.4" rx="2.6" stroke-width="1.9"/><path d="M5 10.2L8.4 13.4L15 5.8" stroke-width="1.8"/></g></svg>
<div style="left:390px;top:2065.3px;width:214px;height:37.6px;background:#333333;border-radius:3px;"></div>
<span class="t" style="left:410.80px;top:2075.00px;font-size:18px;line-height:18px;color:#c2c2c2;-webkit-text-stroke:0.25px #c2c2c2;letter-spacing:0.861px;">00:00:00 - 00:30:00</span>
<svg style="left:306.4px;top:2073px;" width="26" height="22" viewBox="0 0 26 22"><g transform="translate(13,11)"><path fill-rule="evenodd" d="M-10.9 0C-7 -7 -3 -9.2 0 -9.2C3 -9.2 7 -7 10.9 0C7 7 3 9.2 0 9.2C-3 9.2 -7 7 -10.9 0ZM3.7 0A3.7 3.7 0 1 0 -3.7 0A3.7 3.7 0 1 0 3.7 0Z" fill="#4e6e8a"/><path d="M-10.4 10.6L10.2 -10.4" stroke="#002c4e" stroke-width="5"/><path d="M-10.4 10.6L10.2 -10.4" stroke="#4e6e8a" stroke-width="1.7"/></g></svg>
<div style="left:10.9px;top:2104.4px;width:365.6px;height:37.9px;background:#002c4e;border-radius:0 4px 4px 0;"></div>
<span class="t" style="left:53.20px;top:2116.00px;font-size:18px;line-height:18px;color:#5a6f8e;-webkit-text-stroke:0.25px #5a6f8e;letter-spacing:0.489px;">Smart Tracer</span>
<svg style="left:231px;top:2113.0px;" width="22" height="22" viewBox="0 0 22 22"><g fill="none" stroke="#4e6e8a" stroke-linejoin="round" opacity="1"><rect x="1.2" y="1" width="17.6" height="17.4" rx="2.6" stroke-width="1.9"/><path d="M5 10.2L8.4 13.4L15 5.8" stroke-width="1.8"/></g></svg>
<div style="left:390px;top:2104.4px;width:214px;height:37.6px;background:#333333;border-radius:3px;"></div>
<span class="t" style="left:410.80px;top:2115.00px;font-size:18px;line-height:18px;color:#c2c2c2;-webkit-text-stroke:0.25px #c2c2c2;letter-spacing:0.861px;">00:00:00 - 00:30:00</span>
<svg style="left:306.4px;top:2112px;" width="26" height="22" viewBox="0 0 26 22"><g transform="translate(13,11)"><path fill-rule="evenodd" d="M-10.9 0C-7 -7 -3 -9.2 0 -9.2C3 -9.2 7 -7 10.9 0C7 7 3 9.2 0 9.2C-3 9.2 -7 7 -10.9 0ZM3.7 0A3.7 3.7 0 1 0 -3.7 0A3.7 3.7 0 1 0 3.7 0Z" fill="#4e6e8a"/><path d="M-10.4 10.6L10.2 -10.4" stroke="#002c4e" stroke-width="5"/><path d="M-10.4 10.6L10.2 -10.4" stroke="#4e6e8a" stroke-width="1.7"/></g></svg>
<div style="left:1147.3px;top:1257.6px;width:1.6px;height:871.4px;background:#d8461c;"></div>
<div style="left:1126.5px;top:1276.2px;width:43.2px;height:19.2px;background:#f04a12;border-radius:3.5px;"></div>
<span class="t" style="left:1130.85px;top:1280.00px;font-size:13.5px;line-height:13.5px;color:#ffffff;font-weight:700;letter-spacing:-0.006px;">01:00</span>
<svg style="left:1597.6px;top:1885px;" width="28" height="34" viewBox="0 0 28 34"><path d="M3 2.6V24.4L8.2 19.6L12 28.2L15.8 26.6L12 18.2H19Z" fill="#fff" stroke="#111" stroke-width="1.4" stroke-linejoin="round"/></svg>
<div style="left:0px;top:2129px;width:3840px;height:31px;background:#1a1a1a;"></div>
<span class="t" style="left:15.50px;top:2138.00px;font-size:18px;line-height:18px;color:#8c8c8c;letter-spacing:-0.031px;">Clipboard: &lt;Multiple Nodes&gt;</span>
<span class="t" style="left:280.30px;top:2138.00px;font-size:18px;line-height:18px;color:#8c8c8c;letter-spacing:-0.318px;">Camera_01</span>
<span class="t" style="left:435.60px;top:2138.00px;font-size:18px;line-height:18px;color:#8c8c8c;letter-spacing:-0.108px;">Parent</span>
<span class="t" style="left:775.50px;top:2138.00px;font-size:18px;line-height:18px;color:#8c8c8c;letter-spacing:-0.171px;">GPU: 16.9 ms</span>
<span class="t" style="left:930.40px;top:2138.00px;font-size:18px;line-height:18px;color:#8c8c8c;letter-spacing:-0.139px;">CPU: 3.5 ms</span>
<span class="t" style="left:1085.30px;top:2138.00px;font-size:18px;line-height:18px;color:#8c8c8c;letter-spacing:-0.205px;">RAM: 1840 mb</span>
<span class="t" style="left:1255.00px;top:2138.00px;font-size:18px;line-height:18px;color:#8c8c8c;letter-spacing:-0.158px;">VRAM: 3585 mb / 11318 mb</span>
<span class="t" style="left:1500.60px;top:2138.00px;font-size:18px;line-height:18px;color:#8c8c8c;letter-spacing:-0.120px;">1897 x 1067 / 1920 x 1080 / 1:1</span>
<span class="t" style="left:1790.40px;top:2138.00px;font-size:18px;line-height:18px;color:#8c8c8c;letter-spacing:-0.050px;">Refine: 0/0, Render Time: 00m:00s</span>
<span class="t" style="left:2169.60px;top:2138.00px;font-size:18px;line-height:18px;color:#8c8c8c;letter-spacing:-0.136px;">Autosave: 19m ago</span>
</div></body></html>
